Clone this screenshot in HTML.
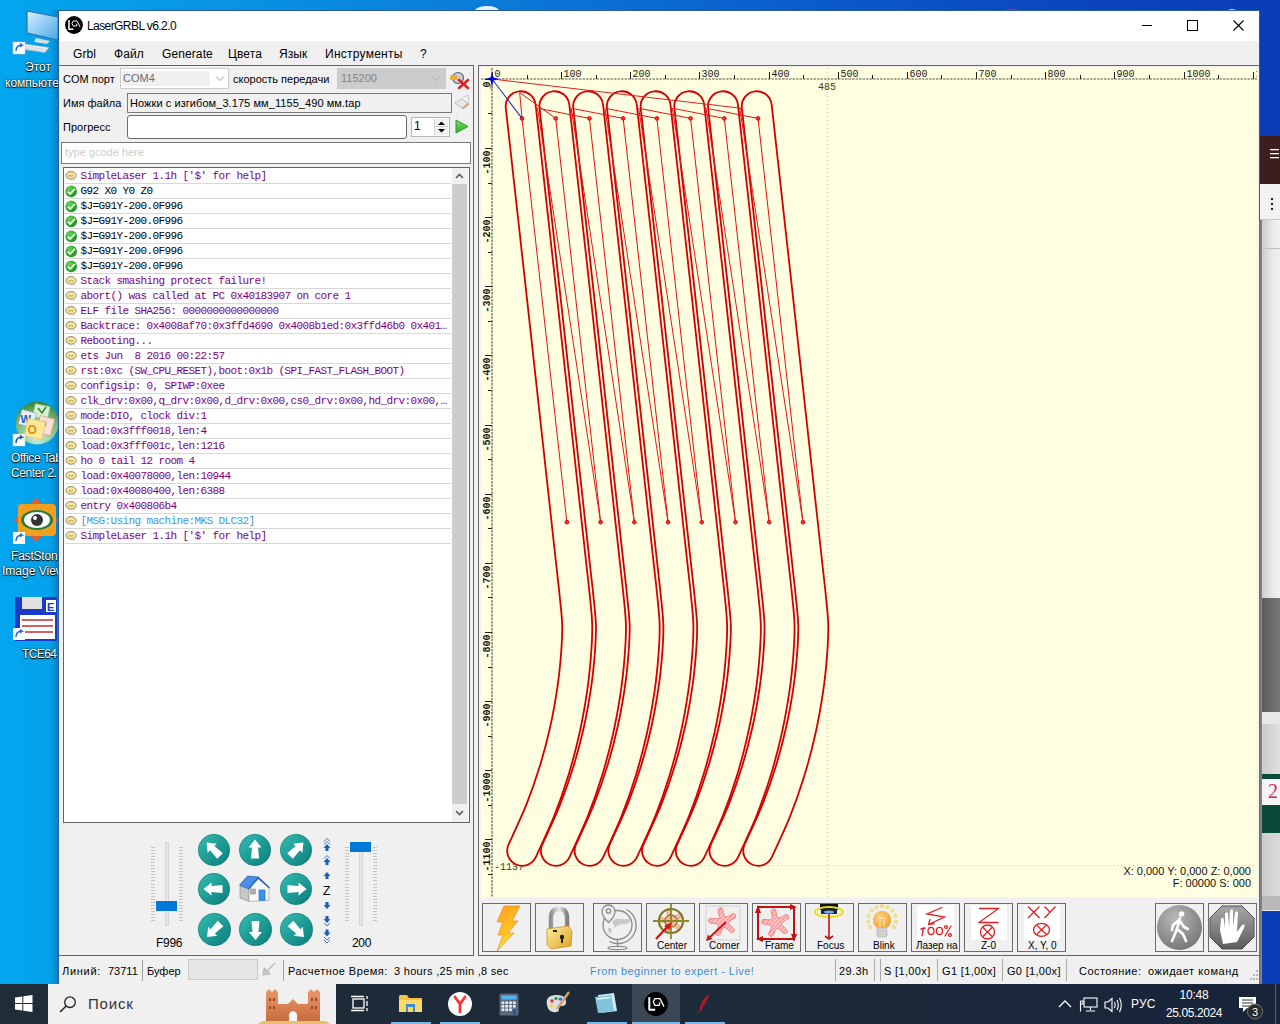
<!DOCTYPE html>
<html><head><meta charset="utf-8">
<style>
*{box-sizing:border-box;margin:0;padding:0}
html,body{width:1280px;height:1024px;overflow:hidden}
body{position:relative;font-family:"Liberation Sans",sans-serif;font-size:11px;color:#000;
background:linear-gradient(90deg,#02a6ee 0px,#0896e4 200px,#0a7ad8 500px,#0a5ccb 800px,#0a44bc 1100px,#0a3cb6 1280px)}
.a{position:absolute}
.t{position:absolute;white-space:pre;line-height:1}
svg{position:absolute;overflow:visible}
</style></head><body>
<svg style="left:0;top:0" width="1280" height="11" viewBox="0 0 1280 11"><ellipse cx="487" cy="11" rx="12" ry="5" fill="#e8f0f8"/><ellipse cx="1012" cy="11" rx="8" ry="2.5" fill="#b0208a"/><ellipse cx="1232" cy="11" rx="4" ry="2" fill="#c8d8f0"/></svg>
<div class="a" style="left:50px;top:10px;width:8px;height:974px;background:linear-gradient(90deg,rgba(0,0,0,0),rgba(0,40,80,0.25))"></div>
<div class="a" style="left:58px;top:10px;width:1202px;height:974px;background:#f0f0f0;border:1px solid #2b5d9a;border-bottom:none"></div>
<div class="a" style="left:59px;top:11px;width:1200px;height:30px;background:#fff"></div>
<svg style="left:65px;top:16px" width="18" height="18" viewBox="0 0 24 24"><circle cx="12" cy="12" r="11.9" fill="#000"/><path d="M5.3 5.3 V17.7 H11.2" stroke="#fff" stroke-width="2" fill="none" stroke-linejoin="round"/><path d="M9.2 10 L11 6.6 H16 L20 14.6 M9.2 10 L11 13.4 H15.2 L15.9 10.4" stroke="#fff" stroke-width="1.3" fill="none" stroke-linejoin="round"/></svg>
<div class="t" style="left:87px;top:20px;font-size:12px;color:#000;font-family:'Liberation Sans';letter-spacing:-0.58px">LaserGRBL v6.2.0</div>
<div class="a" style="left:1142px;top:25px;width:10px;height:1px;background:#000"></div>
<div class="a" style="left:1187px;top:20px;width:11px;height:11px;border:1px solid #000"></div>
<svg style="left:1233px;top:20px" width="11" height="11" viewBox="0 0 11 11"><path d="M0.5 0.5 L10.5 10.5 M10.5 0.5 L0.5 10.5" stroke="#000" stroke-width="1.1"/></svg>
<div class="a" style="left:59px;top:41px;width:1200px;height:24px;background:#f0f0f0"></div>
<div class="t" style="left:73px;top:48px;font-size:12px;color:#000;font-family:'Liberation Sans';letter-spacing:0.1px">Grbl</div>
<div class="t" style="left:114px;top:48px;font-size:12px;color:#000;font-family:'Liberation Sans';letter-spacing:0.1px">Файл</div>
<div class="t" style="left:162px;top:48px;font-size:12px;color:#000;font-family:'Liberation Sans';letter-spacing:0.1px">Generate</div>
<div class="t" style="left:228px;top:48px;font-size:12px;color:#000;font-family:'Liberation Sans';letter-spacing:0.1px">Цвета</div>
<div class="t" style="left:279px;top:48px;font-size:12px;color:#000;font-family:'Liberation Sans';letter-spacing:0.1px">Язык</div>
<div class="t" style="left:325px;top:48px;font-size:12px;color:#000;font-family:'Liberation Sans';letter-spacing:0.25px">Инструменты</div>
<div class="t" style="left:420px;top:48px;font-size:12px;color:#000;font-family:'Liberation Sans';letter-spacing:0.1px">?</div>
<div class="a" style="left:58px;top:65px;width:416px;height:891px;border:1px solid #646464;border-left:none"></div>
<div class="a" style="left:478px;top:65px;width:782px;height:891px;border:1px solid #646464;border-right:none"></div>
<div class="t" style="left:63px;top:74px;font-size:11px;color:#000;font-family:'Liberation Sans';">COM порт</div>
<div class="a" style="left:120px;top:68px;width:109px;height:21px;border:1px solid #cccccc;background:#fff"></div>
<div class="a" style="left:122px;top:71px;width:88px;height:15px;background:#f0f0f0"></div>
<div class="t" style="left:123px;top:73px;font-size:11px;color:#6d6d6d;font-family:'Liberation Sans';">COM4</div>
<svg style="left:215px;top:75px" width="10" height="7" viewBox="0 0 10 7"><path d="M1 1.5 L5 5.5 L9 1.5" stroke="#a0a0a0" stroke-width="1" fill="none"/></svg>
<div class="t" style="left:233px;top:74px;font-size:11px;color:#000;font-family:'Liberation Sans';">скорость передачи</div>
<div class="a" style="left:337px;top:68px;width:109px;height:21px;background:#cccccc"></div>
<div class="t" style="left:341px;top:73px;font-size:11px;color:#838383;font-family:'Liberation Sans';">115200</div>
<svg style="left:431px;top:75px" width="10" height="7" viewBox="0 0 10 7"><path d="M1 1.5 L5 5.5 L9 1.5" stroke="#a8a8a8" stroke-width="1" fill="none"/></svg>
<svg style="left:449px;top:70px" width="21" height="20" viewBox="0 0 21 20"><circle cx="9" cy="8" r="5.5" fill="#c8cdd6" stroke="#5a6270" stroke-width="1.2"/><rect x="1" y="5" width="7" height="5" fill="#e8b030" rx="1"/><path d="M10 10 L19 18 M19 10 L10 18" stroke="#e02020" stroke-width="2.6" stroke-linecap="round"/></svg>
<div class="t" style="left:63px;top:98px;font-size:11px;color:#000;font-family:'Liberation Sans';">Имя файла</div>
<div class="a" style="left:127px;top:93px;width:325px;height:20px;border:1px solid #7a7a7a;background:#f0f0f0"></div>
<div class="t" style="left:130px;top:98px;font-size:11px;color:#000;font-family:'Liberation Sans';letter-spacing:0.07px">Ножки с изгибом_3.175 мм_1155_490 мм.tap</div>
<svg style="left:454px;top:94px" width="16" height="16" viewBox="0 0 16 16"><path d="M1 9 L7 5 L14 9 L8 14 Z" fill="#e8e8e8" stroke="#b0b0b0" stroke-width="0.8"/><path d="M8 14 L15 8 L15 11 L9 15.5 Z" fill="#d4a880"/><path d="M9 4 L14 1 L15 7" fill="#f4f4f4" stroke="#b8b8b8" stroke-width="0.8"/></svg>
<div class="t" style="left:63px;top:122px;font-size:11px;color:#000;font-family:'Liberation Sans';">Прогресс</div>
<div class="a" style="left:127px;top:115px;width:280px;height:24px;border:1px solid #6d6d6d;border-radius:3px;background:#fff"></div>
<div class="a" style="left:411px;top:117px;width:39px;height:20px;border:1px solid #b4b4b4;background:#fff"></div>
<div class="a" style="left:434px;top:119px;width:14px;height:16px;background:#f0f0f0;border-left:1px solid #cfcfcf"></div>
<div class="a" style="left:434px;top:126px;width:14px;height:1px;background:#cfcfcf"></div>
<svg style="left:437px;top:120px" width="9" height="14" viewBox="0 0 9 14"><path d="M1 5 L4.5 1.5 L8 5 Z M1 9 L4.5 12.5 L8 9 Z" fill="#000"/></svg>
<div class="t" style="left:414px;top:120px;font-size:12px;color:#000;font-family:'Liberation Sans';">1</div>
<svg style="left:455px;top:119px" width="14" height="15" viewBox="0 0 14 15"><defs><linearGradient id="gp" x1="0" y1="0" x2="0" y2="1"><stop offset="0" stop-color="#7ee06a"/><stop offset="1" stop-color="#2ca82a"/></linearGradient></defs><path d="M1 1 L13 7.5 L1 14 Z" fill="url(#gp)" stroke="#2a9a2a" stroke-width="1"/></svg>
<div class="a" style="left:61px;top:142px;width:410px;height:22px;border:1px solid #7a7a7a;background:#fff"></div>
<div class="t" style="left:65px;top:146.5px;font-size:11px;color:#cccccc;font-family:'Liberation Sans';">type gcode here</div>
<div class="a" style="left:63px;top:167px;width:407px;height:656px;border:1px solid #646464;background:#fff"></div>
<svg style="left:65px;top:171px" width="13" height="12" viewBox="0 0 13 12"><ellipse cx="6" cy="4.4" rx="5.2" ry="3.8" fill="#f4e4a0" stroke="#9a8c6a" stroke-width="1"/><path d="M8 8 L10 10.5 L9.2 7.6" fill="#c8c0a8"/><path d="M3.8 4.2 h1.3 v1.4 h-1.3z M6.4 4.2 h1.3 v1.4 h-1.3z" fill="#9a7a20"/></svg>
<div class="t" style="left:80.5px;top:171px;font-family:'Liberation Mono';font-size:11px;letter-spacing:-0.6px;color:#7f007f">SimpleLaser 1.1h [&#x27;$&#x27; for help]</div>
<div class="a" style="left:65px;top:183px;width:386px;height:1px;background:#d8d8d8"></div>
<svg style="left:65px;top:185px" width="13" height="13" viewBox="0 0 13 13"><defs><radialGradient id="gc1" cx="0.35" cy="0.3" r="0.8"><stop offset="0" stop-color="#6cd060"/><stop offset="1" stop-color="#138a14"/></radialGradient></defs><circle cx="6.2" cy="6.4" r="5.8" fill="url(#gc1)"/><path d="M2.8 6.6 L5.2 9 L9.8 3.9" stroke="#e6ffe2" stroke-width="1.8" fill="none"/></svg>
<div class="t" style="left:80.5px;top:186px;font-family:'Liberation Mono';font-size:11px;letter-spacing:-0.6px;color:#000">G92 X0 Y0 Z0</div>
<div class="a" style="left:65px;top:198px;width:386px;height:1px;background:#d8d8d8"></div>
<svg style="left:65px;top:200px" width="13" height="13" viewBox="0 0 13 13"><defs><radialGradient id="gc2" cx="0.35" cy="0.3" r="0.8"><stop offset="0" stop-color="#6cd060"/><stop offset="1" stop-color="#138a14"/></radialGradient></defs><circle cx="6.2" cy="6.4" r="5.8" fill="url(#gc2)"/><path d="M2.8 6.6 L5.2 9 L9.8 3.9" stroke="#e6ffe2" stroke-width="1.8" fill="none"/></svg>
<div class="t" style="left:80.5px;top:201px;font-family:'Liberation Mono';font-size:11px;letter-spacing:-0.6px;color:#000">$J=G91Y-200.0F996</div>
<div class="a" style="left:65px;top:213px;width:386px;height:1px;background:#d8d8d8"></div>
<svg style="left:65px;top:215px" width="13" height="13" viewBox="0 0 13 13"><defs><radialGradient id="gc3" cx="0.35" cy="0.3" r="0.8"><stop offset="0" stop-color="#6cd060"/><stop offset="1" stop-color="#138a14"/></radialGradient></defs><circle cx="6.2" cy="6.4" r="5.8" fill="url(#gc3)"/><path d="M2.8 6.6 L5.2 9 L9.8 3.9" stroke="#e6ffe2" stroke-width="1.8" fill="none"/></svg>
<div class="t" style="left:80.5px;top:216px;font-family:'Liberation Mono';font-size:11px;letter-spacing:-0.6px;color:#000">$J=G91Y-200.0F996</div>
<div class="a" style="left:65px;top:228px;width:386px;height:1px;background:#d8d8d8"></div>
<svg style="left:65px;top:230px" width="13" height="13" viewBox="0 0 13 13"><defs><radialGradient id="gc4" cx="0.35" cy="0.3" r="0.8"><stop offset="0" stop-color="#6cd060"/><stop offset="1" stop-color="#138a14"/></radialGradient></defs><circle cx="6.2" cy="6.4" r="5.8" fill="url(#gc4)"/><path d="M2.8 6.6 L5.2 9 L9.8 3.9" stroke="#e6ffe2" stroke-width="1.8" fill="none"/></svg>
<div class="t" style="left:80.5px;top:231px;font-family:'Liberation Mono';font-size:11px;letter-spacing:-0.6px;color:#000">$J=G91Y-200.0F996</div>
<div class="a" style="left:65px;top:243px;width:386px;height:1px;background:#d8d8d8"></div>
<svg style="left:65px;top:245px" width="13" height="13" viewBox="0 0 13 13"><defs><radialGradient id="gc5" cx="0.35" cy="0.3" r="0.8"><stop offset="0" stop-color="#6cd060"/><stop offset="1" stop-color="#138a14"/></radialGradient></defs><circle cx="6.2" cy="6.4" r="5.8" fill="url(#gc5)"/><path d="M2.8 6.6 L5.2 9 L9.8 3.9" stroke="#e6ffe2" stroke-width="1.8" fill="none"/></svg>
<div class="t" style="left:80.5px;top:246px;font-family:'Liberation Mono';font-size:11px;letter-spacing:-0.6px;color:#000">$J=G91Y-200.0F996</div>
<div class="a" style="left:65px;top:258px;width:386px;height:1px;background:#d8d8d8"></div>
<svg style="left:65px;top:260px" width="13" height="13" viewBox="0 0 13 13"><defs><radialGradient id="gc6" cx="0.35" cy="0.3" r="0.8"><stop offset="0" stop-color="#6cd060"/><stop offset="1" stop-color="#138a14"/></radialGradient></defs><circle cx="6.2" cy="6.4" r="5.8" fill="url(#gc6)"/><path d="M2.8 6.6 L5.2 9 L9.8 3.9" stroke="#e6ffe2" stroke-width="1.8" fill="none"/></svg>
<div class="t" style="left:80.5px;top:261px;font-family:'Liberation Mono';font-size:11px;letter-spacing:-0.6px;color:#000">$J=G91Y-200.0F996</div>
<div class="a" style="left:65px;top:273px;width:386px;height:1px;background:#d8d8d8"></div>
<svg style="left:65px;top:276px" width="13" height="12" viewBox="0 0 13 12"><ellipse cx="6" cy="4.4" rx="5.2" ry="3.8" fill="#f4e4a0" stroke="#9a8c6a" stroke-width="1"/><path d="M8 8 L10 10.5 L9.2 7.6" fill="#c8c0a8"/><path d="M3.8 4.2 h1.3 v1.4 h-1.3z M6.4 4.2 h1.3 v1.4 h-1.3z" fill="#9a7a20"/></svg>
<div class="t" style="left:80.5px;top:276px;font-family:'Liberation Mono';font-size:11px;letter-spacing:-0.6px;color:#7f007f">Stack smashing protect failure!</div>
<div class="a" style="left:65px;top:288px;width:386px;height:1px;background:#d8d8d8"></div>
<svg style="left:65px;top:291px" width="13" height="12" viewBox="0 0 13 12"><ellipse cx="6" cy="4.4" rx="5.2" ry="3.8" fill="#f4e4a0" stroke="#9a8c6a" stroke-width="1"/><path d="M8 8 L10 10.5 L9.2 7.6" fill="#c8c0a8"/><path d="M3.8 4.2 h1.3 v1.4 h-1.3z M6.4 4.2 h1.3 v1.4 h-1.3z" fill="#9a7a20"/></svg>
<div class="t" style="left:80.5px;top:291px;font-family:'Liberation Mono';font-size:11px;letter-spacing:-0.6px;color:#7f007f">abort() was called at PC 0x40183907 on core 1</div>
<div class="a" style="left:65px;top:303px;width:386px;height:1px;background:#d8d8d8"></div>
<svg style="left:65px;top:306px" width="13" height="12" viewBox="0 0 13 12"><ellipse cx="6" cy="4.4" rx="5.2" ry="3.8" fill="#f4e4a0" stroke="#9a8c6a" stroke-width="1"/><path d="M8 8 L10 10.5 L9.2 7.6" fill="#c8c0a8"/><path d="M3.8 4.2 h1.3 v1.4 h-1.3z M6.4 4.2 h1.3 v1.4 h-1.3z" fill="#9a7a20"/></svg>
<div class="t" style="left:80.5px;top:306px;font-family:'Liberation Mono';font-size:11px;letter-spacing:-0.6px;color:#7f007f">ELF file SHA256: 0000000000000000</div>
<div class="a" style="left:65px;top:318px;width:386px;height:1px;background:#d8d8d8"></div>
<svg style="left:65px;top:321px" width="13" height="12" viewBox="0 0 13 12"><ellipse cx="6" cy="4.4" rx="5.2" ry="3.8" fill="#f4e4a0" stroke="#9a8c6a" stroke-width="1"/><path d="M8 8 L10 10.5 L9.2 7.6" fill="#c8c0a8"/><path d="M3.8 4.2 h1.3 v1.4 h-1.3z M6.4 4.2 h1.3 v1.4 h-1.3z" fill="#9a7a20"/></svg>
<div class="t" style="left:80.5px;top:321px;font-family:'Liberation Mono';font-size:11px;letter-spacing:-0.6px;color:#7f007f">Backtrace: 0x4008af70:0x3ffd4690 0x4008b1ed:0x3ffd46b0 0x401…</div>
<div class="a" style="left:65px;top:333px;width:386px;height:1px;background:#d8d8d8"></div>
<svg style="left:65px;top:336px" width="13" height="12" viewBox="0 0 13 12"><ellipse cx="6" cy="4.4" rx="5.2" ry="3.8" fill="#f4e4a0" stroke="#9a8c6a" stroke-width="1"/><path d="M8 8 L10 10.5 L9.2 7.6" fill="#c8c0a8"/><path d="M3.8 4.2 h1.3 v1.4 h-1.3z M6.4 4.2 h1.3 v1.4 h-1.3z" fill="#9a7a20"/></svg>
<div class="t" style="left:80.5px;top:336px;font-family:'Liberation Mono';font-size:11px;letter-spacing:-0.6px;color:#7f007f">Rebooting...</div>
<div class="a" style="left:65px;top:348px;width:386px;height:1px;background:#d8d8d8"></div>
<svg style="left:65px;top:351px" width="13" height="12" viewBox="0 0 13 12"><ellipse cx="6" cy="4.4" rx="5.2" ry="3.8" fill="#f4e4a0" stroke="#9a8c6a" stroke-width="1"/><path d="M8 8 L10 10.5 L9.2 7.6" fill="#c8c0a8"/><path d="M3.8 4.2 h1.3 v1.4 h-1.3z M6.4 4.2 h1.3 v1.4 h-1.3z" fill="#9a7a20"/></svg>
<div class="t" style="left:80.5px;top:351px;font-family:'Liberation Mono';font-size:11px;letter-spacing:-0.6px;color:#7f007f">ets Jun  8 2016 00:22:57</div>
<div class="a" style="left:65px;top:363px;width:386px;height:1px;background:#d8d8d8"></div>
<svg style="left:65px;top:366px" width="13" height="12" viewBox="0 0 13 12"><ellipse cx="6" cy="4.4" rx="5.2" ry="3.8" fill="#f4e4a0" stroke="#9a8c6a" stroke-width="1"/><path d="M8 8 L10 10.5 L9.2 7.6" fill="#c8c0a8"/><path d="M3.8 4.2 h1.3 v1.4 h-1.3z M6.4 4.2 h1.3 v1.4 h-1.3z" fill="#9a7a20"/></svg>
<div class="t" style="left:80.5px;top:366px;font-family:'Liberation Mono';font-size:11px;letter-spacing:-0.6px;color:#7f007f">rst:0xc (SW_CPU_RESET),boot:0x1b (SPI_FAST_FLASH_BOOT)</div>
<div class="a" style="left:65px;top:378px;width:386px;height:1px;background:#d8d8d8"></div>
<svg style="left:65px;top:381px" width="13" height="12" viewBox="0 0 13 12"><ellipse cx="6" cy="4.4" rx="5.2" ry="3.8" fill="#f4e4a0" stroke="#9a8c6a" stroke-width="1"/><path d="M8 8 L10 10.5 L9.2 7.6" fill="#c8c0a8"/><path d="M3.8 4.2 h1.3 v1.4 h-1.3z M6.4 4.2 h1.3 v1.4 h-1.3z" fill="#9a7a20"/></svg>
<div class="t" style="left:80.5px;top:381px;font-family:'Liberation Mono';font-size:11px;letter-spacing:-0.6px;color:#7f007f">configsip: 0, SPIWP:0xee</div>
<div class="a" style="left:65px;top:393px;width:386px;height:1px;background:#d8d8d8"></div>
<svg style="left:65px;top:396px" width="13" height="12" viewBox="0 0 13 12"><ellipse cx="6" cy="4.4" rx="5.2" ry="3.8" fill="#f4e4a0" stroke="#9a8c6a" stroke-width="1"/><path d="M8 8 L10 10.5 L9.2 7.6" fill="#c8c0a8"/><path d="M3.8 4.2 h1.3 v1.4 h-1.3z M6.4 4.2 h1.3 v1.4 h-1.3z" fill="#9a7a20"/></svg>
<div class="t" style="left:80.5px;top:396px;font-family:'Liberation Mono';font-size:11px;letter-spacing:-0.6px;color:#7f007f">clk_drv:0x00,q_drv:0x00,d_drv:0x00,cs0_drv:0x00,hd_drv:0x00,…</div>
<div class="a" style="left:65px;top:408px;width:386px;height:1px;background:#d8d8d8"></div>
<svg style="left:65px;top:411px" width="13" height="12" viewBox="0 0 13 12"><ellipse cx="6" cy="4.4" rx="5.2" ry="3.8" fill="#f4e4a0" stroke="#9a8c6a" stroke-width="1"/><path d="M8 8 L10 10.5 L9.2 7.6" fill="#c8c0a8"/><path d="M3.8 4.2 h1.3 v1.4 h-1.3z M6.4 4.2 h1.3 v1.4 h-1.3z" fill="#9a7a20"/></svg>
<div class="t" style="left:80.5px;top:411px;font-family:'Liberation Mono';font-size:11px;letter-spacing:-0.6px;color:#7f007f">mode:DIO, clock div:1</div>
<div class="a" style="left:65px;top:423px;width:386px;height:1px;background:#d8d8d8"></div>
<svg style="left:65px;top:426px" width="13" height="12" viewBox="0 0 13 12"><ellipse cx="6" cy="4.4" rx="5.2" ry="3.8" fill="#f4e4a0" stroke="#9a8c6a" stroke-width="1"/><path d="M8 8 L10 10.5 L9.2 7.6" fill="#c8c0a8"/><path d="M3.8 4.2 h1.3 v1.4 h-1.3z M6.4 4.2 h1.3 v1.4 h-1.3z" fill="#9a7a20"/></svg>
<div class="t" style="left:80.5px;top:426px;font-family:'Liberation Mono';font-size:11px;letter-spacing:-0.6px;color:#7f007f">load:0x3fff0018,len:4</div>
<div class="a" style="left:65px;top:438px;width:386px;height:1px;background:#d8d8d8"></div>
<svg style="left:65px;top:441px" width="13" height="12" viewBox="0 0 13 12"><ellipse cx="6" cy="4.4" rx="5.2" ry="3.8" fill="#f4e4a0" stroke="#9a8c6a" stroke-width="1"/><path d="M8 8 L10 10.5 L9.2 7.6" fill="#c8c0a8"/><path d="M3.8 4.2 h1.3 v1.4 h-1.3z M6.4 4.2 h1.3 v1.4 h-1.3z" fill="#9a7a20"/></svg>
<div class="t" style="left:80.5px;top:441px;font-family:'Liberation Mono';font-size:11px;letter-spacing:-0.6px;color:#7f007f">load:0x3fff001c,len:1216</div>
<div class="a" style="left:65px;top:453px;width:386px;height:1px;background:#d8d8d8"></div>
<svg style="left:65px;top:456px" width="13" height="12" viewBox="0 0 13 12"><ellipse cx="6" cy="4.4" rx="5.2" ry="3.8" fill="#f4e4a0" stroke="#9a8c6a" stroke-width="1"/><path d="M8 8 L10 10.5 L9.2 7.6" fill="#c8c0a8"/><path d="M3.8 4.2 h1.3 v1.4 h-1.3z M6.4 4.2 h1.3 v1.4 h-1.3z" fill="#9a7a20"/></svg>
<div class="t" style="left:80.5px;top:456px;font-family:'Liberation Mono';font-size:11px;letter-spacing:-0.6px;color:#7f007f">ho 0 tail 12 room 4</div>
<div class="a" style="left:65px;top:468px;width:386px;height:1px;background:#d8d8d8"></div>
<svg style="left:65px;top:471px" width="13" height="12" viewBox="0 0 13 12"><ellipse cx="6" cy="4.4" rx="5.2" ry="3.8" fill="#f4e4a0" stroke="#9a8c6a" stroke-width="1"/><path d="M8 8 L10 10.5 L9.2 7.6" fill="#c8c0a8"/><path d="M3.8 4.2 h1.3 v1.4 h-1.3z M6.4 4.2 h1.3 v1.4 h-1.3z" fill="#9a7a20"/></svg>
<div class="t" style="left:80.5px;top:471px;font-family:'Liberation Mono';font-size:11px;letter-spacing:-0.6px;color:#7f007f">load:0x40078000,len:10944</div>
<div class="a" style="left:65px;top:483px;width:386px;height:1px;background:#d8d8d8"></div>
<svg style="left:65px;top:486px" width="13" height="12" viewBox="0 0 13 12"><ellipse cx="6" cy="4.4" rx="5.2" ry="3.8" fill="#f4e4a0" stroke="#9a8c6a" stroke-width="1"/><path d="M8 8 L10 10.5 L9.2 7.6" fill="#c8c0a8"/><path d="M3.8 4.2 h1.3 v1.4 h-1.3z M6.4 4.2 h1.3 v1.4 h-1.3z" fill="#9a7a20"/></svg>
<div class="t" style="left:80.5px;top:486px;font-family:'Liberation Mono';font-size:11px;letter-spacing:-0.6px;color:#7f007f">load:0x40080400,len:6388</div>
<div class="a" style="left:65px;top:498px;width:386px;height:1px;background:#d8d8d8"></div>
<svg style="left:65px;top:501px" width="13" height="12" viewBox="0 0 13 12"><ellipse cx="6" cy="4.4" rx="5.2" ry="3.8" fill="#f4e4a0" stroke="#9a8c6a" stroke-width="1"/><path d="M8 8 L10 10.5 L9.2 7.6" fill="#c8c0a8"/><path d="M3.8 4.2 h1.3 v1.4 h-1.3z M6.4 4.2 h1.3 v1.4 h-1.3z" fill="#9a7a20"/></svg>
<div class="t" style="left:80.5px;top:501px;font-family:'Liberation Mono';font-size:11px;letter-spacing:-0.6px;color:#7f007f">entry 0x400806b4</div>
<div class="a" style="left:65px;top:513px;width:386px;height:1px;background:#d8d8d8"></div>
<svg style="left:65px;top:516px" width="13" height="12" viewBox="0 0 13 12"><ellipse cx="6" cy="4.4" rx="5.2" ry="3.8" fill="#f4e4a0" stroke="#9a8c6a" stroke-width="1"/><path d="M8 8 L10 10.5 L9.2 7.6" fill="#c8c0a8"/><path d="M3.8 4.2 h1.3 v1.4 h-1.3z M6.4 4.2 h1.3 v1.4 h-1.3z" fill="#9a7a20"/></svg>
<div class="t" style="left:80.5px;top:516px;font-family:'Liberation Mono';font-size:11px;letter-spacing:-0.6px;color:#3d9ad8">[MSG:Using machine:MKS DLC32]</div>
<div class="a" style="left:65px;top:528px;width:386px;height:1px;background:#d8d8d8"></div>
<svg style="left:65px;top:531px" width="13" height="12" viewBox="0 0 13 12"><ellipse cx="6" cy="4.4" rx="5.2" ry="3.8" fill="#f4e4a0" stroke="#9a8c6a" stroke-width="1"/><path d="M8 8 L10 10.5 L9.2 7.6" fill="#c8c0a8"/><path d="M3.8 4.2 h1.3 v1.4 h-1.3z M6.4 4.2 h1.3 v1.4 h-1.3z" fill="#9a7a20"/></svg>
<div class="t" style="left:80.5px;top:531px;font-family:'Liberation Mono';font-size:11px;letter-spacing:-0.6px;color:#7f007f">SimpleLaser 1.1h [&#x27;$&#x27; for help]</div>
<div class="a" style="left:65px;top:543px;width:386px;height:1px;background:#d8d8d8"></div>
<div class="a" style="left:452px;top:168px;width:16px;height:654px;background:#f0f0f0"></div>
<div class="a" style="left:452px;top:184px;width:15px;height:620px;background:#cdcdcd"></div>
<svg style="left:455px;top:173px" width="9" height="6" viewBox="0 0 9 6"><path d="M1 5 L4.5 1.5 L8 5" stroke="#606060" stroke-width="1.6" fill="none"/></svg>
<svg style="left:455px;top:810px" width="9" height="6" viewBox="0 0 9 6"><path d="M1 1 L4.5 4.5 L8 1" stroke="#606060" stroke-width="1.6" fill="none"/></svg>
<div class="a" style="left:165px;top:842px;width:4px;height:84px;background:#e7e7e7;border:1px solid #d6d6d6"></div>
<div class="a" style="left:151px;top:847px;width:4px;height:1px;background:#c4c4c4"></div>
<div class="a" style="left:179px;top:847px;width:4px;height:1px;background:#c4c4c4"></div>
<div class="a" style="left:151px;top:850px;width:4px;height:1px;background:#c4c4c4"></div>
<div class="a" style="left:179px;top:850px;width:4px;height:1px;background:#c4c4c4"></div>
<div class="a" style="left:151px;top:853px;width:4px;height:1px;background:#c4c4c4"></div>
<div class="a" style="left:179px;top:853px;width:4px;height:1px;background:#c4c4c4"></div>
<div class="a" style="left:151px;top:856px;width:4px;height:1px;background:#c4c4c4"></div>
<div class="a" style="left:179px;top:856px;width:4px;height:1px;background:#c4c4c4"></div>
<div class="a" style="left:151px;top:859px;width:4px;height:1px;background:#c4c4c4"></div>
<div class="a" style="left:179px;top:859px;width:4px;height:1px;background:#c4c4c4"></div>
<div class="a" style="left:151px;top:862px;width:4px;height:1px;background:#c4c4c4"></div>
<div class="a" style="left:179px;top:862px;width:4px;height:1px;background:#c4c4c4"></div>
<div class="a" style="left:151px;top:865px;width:4px;height:1px;background:#c4c4c4"></div>
<div class="a" style="left:179px;top:865px;width:4px;height:1px;background:#c4c4c4"></div>
<div class="a" style="left:151px;top:868px;width:4px;height:1px;background:#c4c4c4"></div>
<div class="a" style="left:179px;top:868px;width:4px;height:1px;background:#c4c4c4"></div>
<div class="a" style="left:151px;top:871px;width:4px;height:1px;background:#c4c4c4"></div>
<div class="a" style="left:179px;top:871px;width:4px;height:1px;background:#c4c4c4"></div>
<div class="a" style="left:151px;top:874px;width:4px;height:1px;background:#c4c4c4"></div>
<div class="a" style="left:179px;top:874px;width:4px;height:1px;background:#c4c4c4"></div>
<div class="a" style="left:151px;top:877px;width:4px;height:1px;background:#c4c4c4"></div>
<div class="a" style="left:179px;top:877px;width:4px;height:1px;background:#c4c4c4"></div>
<div class="a" style="left:151px;top:880px;width:4px;height:1px;background:#c4c4c4"></div>
<div class="a" style="left:179px;top:880px;width:4px;height:1px;background:#c4c4c4"></div>
<div class="a" style="left:151px;top:884px;width:4px;height:1px;background:#c4c4c4"></div>
<div class="a" style="left:179px;top:884px;width:4px;height:1px;background:#c4c4c4"></div>
<div class="a" style="left:151px;top:887px;width:4px;height:1px;background:#c4c4c4"></div>
<div class="a" style="left:179px;top:887px;width:4px;height:1px;background:#c4c4c4"></div>
<div class="a" style="left:151px;top:890px;width:4px;height:1px;background:#c4c4c4"></div>
<div class="a" style="left:179px;top:890px;width:4px;height:1px;background:#c4c4c4"></div>
<div class="a" style="left:151px;top:893px;width:4px;height:1px;background:#c4c4c4"></div>
<div class="a" style="left:179px;top:893px;width:4px;height:1px;background:#c4c4c4"></div>
<div class="a" style="left:151px;top:896px;width:4px;height:1px;background:#c4c4c4"></div>
<div class="a" style="left:179px;top:896px;width:4px;height:1px;background:#c4c4c4"></div>
<div class="a" style="left:151px;top:899px;width:4px;height:1px;background:#c4c4c4"></div>
<div class="a" style="left:179px;top:899px;width:4px;height:1px;background:#c4c4c4"></div>
<div class="a" style="left:151px;top:902px;width:4px;height:1px;background:#c4c4c4"></div>
<div class="a" style="left:179px;top:902px;width:4px;height:1px;background:#c4c4c4"></div>
<div class="a" style="left:151px;top:905px;width:4px;height:1px;background:#c4c4c4"></div>
<div class="a" style="left:179px;top:905px;width:4px;height:1px;background:#c4c4c4"></div>
<div class="a" style="left:151px;top:908px;width:4px;height:1px;background:#c4c4c4"></div>
<div class="a" style="left:179px;top:908px;width:4px;height:1px;background:#c4c4c4"></div>
<div class="a" style="left:151px;top:911px;width:4px;height:1px;background:#c4c4c4"></div>
<div class="a" style="left:179px;top:911px;width:4px;height:1px;background:#c4c4c4"></div>
<div class="a" style="left:151px;top:914px;width:4px;height:1px;background:#c4c4c4"></div>
<div class="a" style="left:179px;top:914px;width:4px;height:1px;background:#c4c4c4"></div>
<div class="a" style="left:151px;top:917px;width:4px;height:1px;background:#c4c4c4"></div>
<div class="a" style="left:179px;top:917px;width:4px;height:1px;background:#c4c4c4"></div>
<div class="a" style="left:151px;top:920px;width:4px;height:1px;background:#c4c4c4"></div>
<div class="a" style="left:179px;top:920px;width:4px;height:1px;background:#c4c4c4"></div>
<div class="a" style="left:156px;top:901px;width:21px;height:10px;background:#0078d7"></div>
<div class="a" style="left:359px;top:842px;width:4px;height:84px;background:#e7e7e7;border:1px solid #d6d6d6"></div>
<div class="a" style="left:345px;top:847px;width:4px;height:1px;background:#c4c4c4"></div>
<div class="a" style="left:373px;top:847px;width:4px;height:1px;background:#c4c4c4"></div>
<div class="a" style="left:345px;top:850px;width:4px;height:1px;background:#c4c4c4"></div>
<div class="a" style="left:373px;top:850px;width:4px;height:1px;background:#c4c4c4"></div>
<div class="a" style="left:345px;top:853px;width:4px;height:1px;background:#c4c4c4"></div>
<div class="a" style="left:373px;top:853px;width:4px;height:1px;background:#c4c4c4"></div>
<div class="a" style="left:345px;top:856px;width:4px;height:1px;background:#c4c4c4"></div>
<div class="a" style="left:373px;top:856px;width:4px;height:1px;background:#c4c4c4"></div>
<div class="a" style="left:345px;top:859px;width:4px;height:1px;background:#c4c4c4"></div>
<div class="a" style="left:373px;top:859px;width:4px;height:1px;background:#c4c4c4"></div>
<div class="a" style="left:345px;top:862px;width:4px;height:1px;background:#c4c4c4"></div>
<div class="a" style="left:373px;top:862px;width:4px;height:1px;background:#c4c4c4"></div>
<div class="a" style="left:345px;top:865px;width:4px;height:1px;background:#c4c4c4"></div>
<div class="a" style="left:373px;top:865px;width:4px;height:1px;background:#c4c4c4"></div>
<div class="a" style="left:345px;top:868px;width:4px;height:1px;background:#c4c4c4"></div>
<div class="a" style="left:373px;top:868px;width:4px;height:1px;background:#c4c4c4"></div>
<div class="a" style="left:345px;top:871px;width:4px;height:1px;background:#c4c4c4"></div>
<div class="a" style="left:373px;top:871px;width:4px;height:1px;background:#c4c4c4"></div>
<div class="a" style="left:345px;top:874px;width:4px;height:1px;background:#c4c4c4"></div>
<div class="a" style="left:373px;top:874px;width:4px;height:1px;background:#c4c4c4"></div>
<div class="a" style="left:345px;top:877px;width:4px;height:1px;background:#c4c4c4"></div>
<div class="a" style="left:373px;top:877px;width:4px;height:1px;background:#c4c4c4"></div>
<div class="a" style="left:345px;top:880px;width:4px;height:1px;background:#c4c4c4"></div>
<div class="a" style="left:373px;top:880px;width:4px;height:1px;background:#c4c4c4"></div>
<div class="a" style="left:345px;top:884px;width:4px;height:1px;background:#c4c4c4"></div>
<div class="a" style="left:373px;top:884px;width:4px;height:1px;background:#c4c4c4"></div>
<div class="a" style="left:345px;top:887px;width:4px;height:1px;background:#c4c4c4"></div>
<div class="a" style="left:373px;top:887px;width:4px;height:1px;background:#c4c4c4"></div>
<div class="a" style="left:345px;top:890px;width:4px;height:1px;background:#c4c4c4"></div>
<div class="a" style="left:373px;top:890px;width:4px;height:1px;background:#c4c4c4"></div>
<div class="a" style="left:345px;top:893px;width:4px;height:1px;background:#c4c4c4"></div>
<div class="a" style="left:373px;top:893px;width:4px;height:1px;background:#c4c4c4"></div>
<div class="a" style="left:345px;top:896px;width:4px;height:1px;background:#c4c4c4"></div>
<div class="a" style="left:373px;top:896px;width:4px;height:1px;background:#c4c4c4"></div>
<div class="a" style="left:345px;top:899px;width:4px;height:1px;background:#c4c4c4"></div>
<div class="a" style="left:373px;top:899px;width:4px;height:1px;background:#c4c4c4"></div>
<div class="a" style="left:345px;top:902px;width:4px;height:1px;background:#c4c4c4"></div>
<div class="a" style="left:373px;top:902px;width:4px;height:1px;background:#c4c4c4"></div>
<div class="a" style="left:345px;top:905px;width:4px;height:1px;background:#c4c4c4"></div>
<div class="a" style="left:373px;top:905px;width:4px;height:1px;background:#c4c4c4"></div>
<div class="a" style="left:345px;top:908px;width:4px;height:1px;background:#c4c4c4"></div>
<div class="a" style="left:373px;top:908px;width:4px;height:1px;background:#c4c4c4"></div>
<div class="a" style="left:345px;top:911px;width:4px;height:1px;background:#c4c4c4"></div>
<div class="a" style="left:373px;top:911px;width:4px;height:1px;background:#c4c4c4"></div>
<div class="a" style="left:345px;top:914px;width:4px;height:1px;background:#c4c4c4"></div>
<div class="a" style="left:373px;top:914px;width:4px;height:1px;background:#c4c4c4"></div>
<div class="a" style="left:345px;top:917px;width:4px;height:1px;background:#c4c4c4"></div>
<div class="a" style="left:373px;top:917px;width:4px;height:1px;background:#c4c4c4"></div>
<div class="a" style="left:345px;top:920px;width:4px;height:1px;background:#c4c4c4"></div>
<div class="a" style="left:373px;top:920px;width:4px;height:1px;background:#c4c4c4"></div>
<div class="a" style="left:350px;top:842px;width:21px;height:10px;background:#0078d7"></div>
<div class="t" style="left:156px;top:937px;font-size:12px;color:#000;font-family:'Liberation Sans';letter-spacing:-0.3px">F996</div>
<div class="t" style="left:352px;top:937px;font-size:12px;color:#000;font-family:'Liberation Sans';letter-spacing:-0.3px">200</div>
<svg style="left:197px;top:833px" width="34" height="34" viewBox="-17 -17 34 34"><defs><linearGradient id="jg214850" x1="0" y1="0" x2="1" y2="1"><stop offset="0" stop-color="#33bdb4"/><stop offset="1" stop-color="#0a7c78"/></linearGradient></defs><circle cx="0" cy="0" r="15.7" fill="url(#jg214850)" stroke="#0b6f6a" stroke-width="0.6"/><path transform="rotate(-45)" d="M0 -10.5 L6.5 -2.5 L3 -2.5 L4 8.5 L-4 8.5 L-3 -2.5 L-6.5 -2.5 Z" fill="#fff"/></svg>
<svg style="left:238px;top:833px" width="34" height="34" viewBox="-17 -17 34 34"><defs><linearGradient id="jg255850" x1="0" y1="0" x2="1" y2="1"><stop offset="0" stop-color="#33bdb4"/><stop offset="1" stop-color="#0a7c78"/></linearGradient></defs><circle cx="0" cy="0" r="15.7" fill="url(#jg255850)" stroke="#0b6f6a" stroke-width="0.6"/><path transform="rotate(0)" d="M0 -10.5 L6.5 -2.5 L3 -2.5 L4 8.5 L-4 8.5 L-3 -2.5 L-6.5 -2.5 Z" fill="#fff"/></svg>
<svg style="left:279px;top:833px" width="34" height="34" viewBox="-17 -17 34 34"><defs><linearGradient id="jg296850" x1="0" y1="0" x2="1" y2="1"><stop offset="0" stop-color="#33bdb4"/><stop offset="1" stop-color="#0a7c78"/></linearGradient></defs><circle cx="0" cy="0" r="15.7" fill="url(#jg296850)" stroke="#0b6f6a" stroke-width="0.6"/><path transform="rotate(45)" d="M0 -10.5 L6.5 -2.5 L3 -2.5 L4 8.5 L-4 8.5 L-3 -2.5 L-6.5 -2.5 Z" fill="#fff"/></svg>
<svg style="left:197px;top:872px" width="34" height="34" viewBox="-17 -17 34 34"><defs><linearGradient id="jg214889" x1="0" y1="0" x2="1" y2="1"><stop offset="0" stop-color="#33bdb4"/><stop offset="1" stop-color="#0a7c78"/></linearGradient></defs><circle cx="0" cy="0" r="15.7" fill="url(#jg214889)" stroke="#0b6f6a" stroke-width="0.6"/><path transform="rotate(-90)" d="M0 -10.5 L6.5 -2.5 L3 -2.5 L4 8.5 L-4 8.5 L-3 -2.5 L-6.5 -2.5 Z" fill="#fff"/></svg>
<svg style="left:279px;top:872px" width="34" height="34" viewBox="-17 -17 34 34"><defs><linearGradient id="jg296889" x1="0" y1="0" x2="1" y2="1"><stop offset="0" stop-color="#33bdb4"/><stop offset="1" stop-color="#0a7c78"/></linearGradient></defs><circle cx="0" cy="0" r="15.7" fill="url(#jg296889)" stroke="#0b6f6a" stroke-width="0.6"/><path transform="rotate(90)" d="M0 -10.5 L6.5 -2.5 L3 -2.5 L4 8.5 L-4 8.5 L-3 -2.5 L-6.5 -2.5 Z" fill="#fff"/></svg>
<svg style="left:196.5px;top:911.5px" width="35.0" height="35.0" viewBox="-17.5 -17.5 35.0 35.0"><defs><linearGradient id="jg214929" x1="0" y1="0" x2="1" y2="1"><stop offset="0" stop-color="#33bdb4"/><stop offset="1" stop-color="#0a7c78"/></linearGradient></defs><circle cx="0" cy="0" r="16.2" fill="url(#jg214929)" stroke="#0b6f6a" stroke-width="0.6"/><path transform="rotate(-135)" d="M0 -10.5 L6.5 -2.5 L3 -2.5 L4 8.5 L-4 8.5 L-3 -2.5 L-6.5 -2.5 Z" fill="#fff"/></svg>
<svg style="left:237.5px;top:911.5px" width="35.0" height="35.0" viewBox="-17.5 -17.5 35.0 35.0"><defs><linearGradient id="jg255929" x1="0" y1="0" x2="1" y2="1"><stop offset="0" stop-color="#33bdb4"/><stop offset="1" stop-color="#0a7c78"/></linearGradient></defs><circle cx="0" cy="0" r="16.2" fill="url(#jg255929)" stroke="#0b6f6a" stroke-width="0.6"/><path transform="rotate(180)" d="M0 -10.5 L6.5 -2.5 L3 -2.5 L4 8.5 L-4 8.5 L-3 -2.5 L-6.5 -2.5 Z" fill="#fff"/></svg>
<svg style="left:278.5px;top:911.5px" width="35.0" height="35.0" viewBox="-17.5 -17.5 35.0 35.0"><defs><linearGradient id="jg296929" x1="0" y1="0" x2="1" y2="1"><stop offset="0" stop-color="#33bdb4"/><stop offset="1" stop-color="#0a7c78"/></linearGradient></defs><circle cx="0" cy="0" r="16.2" fill="url(#jg296929)" stroke="#0b6f6a" stroke-width="0.6"/><path transform="rotate(135)" d="M0 -10.5 L6.5 -2.5 L3 -2.5 L4 8.5 L-4 8.5 L-3 -2.5 L-6.5 -2.5 Z" fill="#fff"/></svg>
<svg style="left:0;top:0" width="1280" height="1024" viewBox="0 0 1280 1024"><path d="M240 886 L249 889 L249 901.5 L240 898 Z" fill="#c8c8c8" stroke="#8a8a8a" stroke-width="0.6"/><path d="M249 889 L258.3 878 L269 887.4 L269 900.3 L249 901.5 Z" fill="#f6f6f6" stroke="#9a9a9a" stroke-width="0.6"/><path d="M239.5 885 L247.5 876 L258.3 877 L249 889 Z" fill="#4a8ee6" stroke="#2a62b8" stroke-width="0.7"/><path d="M258.3 876.5 L270 887.6 L269 888.5 L258.3 879 L249 889.5 L248.5 888.5 Z" fill="#2a62c0"/><rect x="259" y="890" width="6" height="10.5" fill="#3d95ea" stroke="#1e62b8" stroke-width="0.6"/><rect x="250.5" y="889" width="5" height="5" fill="#b0b0b0" stroke="#808080" stroke-width="0.5"/></svg>
<svg style="left:320px;top:834px" width="14" height="114" viewBox="320 834 14 114"><path d="M324 841.5 L327 838.5 L330 841.5" stroke="#3a7ad0" stroke-width="1" fill="none"/><path d="M324 844.5 L327 841.5 L330 844.5" stroke="#3a7ad0" stroke-width="1" fill="none"/><path d="M327 844 L330.5 848 L328.5 848 L328.5 851 L325.5 851 L325.5 848 L323.5 848 Z" fill="#1a5fb4"/><path d="M324 858.5 L327 855.5 L330 858.5" stroke="#3a7ad0" stroke-width="1" fill="none"/><path d="M327 858 L330.5 862 L328.5 862 L328.5 865 L325.5 865 L325.5 862 L323.5 862 Z" fill="#1a5fb4"/><path d="M327 872 L330.5 876 L328.5 876 L328.5 879 L325.5 879 L325.5 876 L323.5 876 Z" fill="#1a5fb4"/><path d="M327 909 L330.5 905 L328.5 905 L328.5 902 L325.5 902 L325.5 905 L323.5 905 Z" fill="#1a5fb4"/><path d="M327 923 L330.5 919 L328.5 919 L328.5 916 L325.5 916 L325.5 919 L323.5 919 Z" fill="#1a5fb4"/><path d="M324 923 L327 926 L330 923" stroke="#3a7ad0" stroke-width="1" fill="none"/><path d="M327 936.5 L330.5 932.5 L328.5 932.5 L328.5 929.5 L325.5 929.5 L325.5 932.5 L323.5 932.5 Z" fill="#1a5fb4"/><path d="M324 937 L327 940 L330 937" stroke="#3a7ad0" stroke-width="1" fill="none"/><path d="M324 940 L327 943 L330 940" stroke="#3a7ad0" stroke-width="1" fill="none"/></svg>
<div class="t" style="left:323px;top:885px;font-size:12px;color:#000;font-family:'Liberation Sans';">Z</div>
<svg style="left:0;top:0" width="1280" height="1024" viewBox="0 0 1280 1024"><defs><clipPath id="cv"><rect x="481" y="68" width="776" height="829"/></clipPath></defs><rect x="479" y="66" width="780" height="832" fill="#f4f4f0"/><rect x="481" y="68" width="776" height="829" fill="#fffee0"/><g clip-path="url(#cv)"><line x1="827.5" y1="68" x2="827.5" y2="897" stroke="#c8c8b8" stroke-width="1" stroke-dasharray="1,3"/><line x1="481" y1="865.5" x2="1257" y2="865.5" stroke="#c8c8b8" stroke-width="1" stroke-dasharray="1,3"/><text x="818" y="89.5" font-family="Liberation Mono" font-size="10" fill="#404030">485</text><text x="494" y="869.5" font-family="Liberation Mono" font-size="10" fill="#404030">-1137</text><line x1="481" y1="79" x2="1257" y2="79" stroke="#5c5c4c" stroke-width="1.2" stroke-dasharray="2.5,1"/><line x1="492" y1="68" x2="492" y2="897" stroke="#5c5c4c" stroke-width="1.2" stroke-dasharray="2.5,1"/><line x1="492.5" y1="72" x2="492.5" y2="79" stroke="#202020" stroke-width="1"/><text x="494.5" y="77" font-family="Liberation Mono" font-size="10" fill="#181810">0</text><line x1="527.5" y1="75" x2="527.5" y2="79" stroke="#202020" stroke-width="1"/><line x1="561.5" y1="72" x2="561.5" y2="79" stroke="#202020" stroke-width="1"/><text x="563.5" y="77" font-family="Liberation Mono" font-size="10" fill="#181810">100</text><line x1="596.5" y1="75" x2="596.5" y2="79" stroke="#202020" stroke-width="1"/><line x1="630.5" y1="72" x2="630.5" y2="79" stroke="#202020" stroke-width="1"/><text x="632.5" y="77" font-family="Liberation Mono" font-size="10" fill="#181810">200</text><line x1="665.5" y1="75" x2="665.5" y2="79" stroke="#202020" stroke-width="1"/><line x1="699.5" y1="72" x2="699.5" y2="79" stroke="#202020" stroke-width="1"/><text x="701.5" y="77" font-family="Liberation Mono" font-size="10" fill="#181810">300</text><line x1="734.5" y1="75" x2="734.5" y2="79" stroke="#202020" stroke-width="1"/><line x1="769.5" y1="72" x2="769.5" y2="79" stroke="#202020" stroke-width="1"/><text x="771.5" y="77" font-family="Liberation Mono" font-size="10" fill="#181810">400</text><line x1="803.5" y1="75" x2="803.5" y2="79" stroke="#202020" stroke-width="1"/><line x1="838.5" y1="72" x2="838.5" y2="79" stroke="#202020" stroke-width="1"/><text x="840.5" y="77" font-family="Liberation Mono" font-size="10" fill="#181810">500</text><line x1="872.5" y1="75" x2="872.5" y2="79" stroke="#202020" stroke-width="1"/><line x1="907.5" y1="72" x2="907.5" y2="79" stroke="#202020" stroke-width="1"/><text x="909.5" y="77" font-family="Liberation Mono" font-size="10" fill="#181810">600</text><line x1="941.5" y1="75" x2="941.5" y2="79" stroke="#202020" stroke-width="1"/><line x1="976.5" y1="72" x2="976.5" y2="79" stroke="#202020" stroke-width="1"/><text x="978.5" y="77" font-family="Liberation Mono" font-size="10" fill="#181810">700</text><line x1="1011.5" y1="75" x2="1011.5" y2="79" stroke="#202020" stroke-width="1"/><line x1="1045.5" y1="72" x2="1045.5" y2="79" stroke="#202020" stroke-width="1"/><text x="1047.5" y="77" font-family="Liberation Mono" font-size="10" fill="#181810">800</text><line x1="1080.5" y1="75" x2="1080.5" y2="79" stroke="#202020" stroke-width="1"/><line x1="1114.5" y1="72" x2="1114.5" y2="79" stroke="#202020" stroke-width="1"/><text x="1116.5" y="77" font-family="Liberation Mono" font-size="10" fill="#181810">900</text><line x1="1149.5" y1="75" x2="1149.5" y2="79" stroke="#202020" stroke-width="1"/><line x1="1184.5" y1="72" x2="1184.5" y2="79" stroke="#202020" stroke-width="1"/><text x="1186.5" y="77" font-family="Liberation Mono" font-size="10" fill="#181810">1000</text><line x1="1218.5" y1="75" x2="1218.5" y2="79" stroke="#202020" stroke-width="1"/><line x1="1253.5" y1="72" x2="1253.5" y2="79" stroke="#202020" stroke-width="1"/><text x="1255.5" y="77" font-family="Liberation Mono" font-size="10" fill="#181810">1100</text><line x1="485" y1="79.5" x2="492" y2="79.5" stroke="#202020" stroke-width="1"/><text transform="translate(489.5,81.5) rotate(-90)" text-anchor="end" font-family="Liberation Mono" font-size="10" font-weight="bold" fill="#181810">0</text><line x1="488" y1="113.5" x2="492" y2="113.5" stroke="#202020" stroke-width="1"/><line x1="485" y1="148.5" x2="492" y2="148.5" stroke="#202020" stroke-width="1"/><text transform="translate(489.5,150.5) rotate(-90)" text-anchor="end" font-family="Liberation Mono" font-size="10" font-weight="bold" fill="#181810">-100</text><line x1="488" y1="183.5" x2="492" y2="183.5" stroke="#202020" stroke-width="1"/><line x1="485" y1="217.5" x2="492" y2="217.5" stroke="#202020" stroke-width="1"/><text transform="translate(489.5,219.5) rotate(-90)" text-anchor="end" font-family="Liberation Mono" font-size="10" font-weight="bold" fill="#181810">-200</text><line x1="488" y1="252.5" x2="492" y2="252.5" stroke="#202020" stroke-width="1"/><line x1="485" y1="286.5" x2="492" y2="286.5" stroke="#202020" stroke-width="1"/><text transform="translate(489.5,288.5) rotate(-90)" text-anchor="end" font-family="Liberation Mono" font-size="10" font-weight="bold" fill="#181810">-300</text><line x1="488" y1="321.5" x2="492" y2="321.5" stroke="#202020" stroke-width="1"/><line x1="485" y1="355.5" x2="492" y2="355.5" stroke="#202020" stroke-width="1"/><text transform="translate(489.5,357.5) rotate(-90)" text-anchor="end" font-family="Liberation Mono" font-size="10" font-weight="bold" fill="#181810">-400</text><line x1="488" y1="390.5" x2="492" y2="390.5" stroke="#202020" stroke-width="1"/><line x1="485" y1="425.5" x2="492" y2="425.5" stroke="#202020" stroke-width="1"/><text transform="translate(489.5,427.5) rotate(-90)" text-anchor="end" font-family="Liberation Mono" font-size="10" font-weight="bold" fill="#181810">-500</text><line x1="488" y1="459.5" x2="492" y2="459.5" stroke="#202020" stroke-width="1"/><line x1="485" y1="494.5" x2="492" y2="494.5" stroke="#202020" stroke-width="1"/><text transform="translate(489.5,496.5) rotate(-90)" text-anchor="end" font-family="Liberation Mono" font-size="10" font-weight="bold" fill="#181810">-600</text><line x1="488" y1="528.5" x2="492" y2="528.5" stroke="#202020" stroke-width="1"/><line x1="485" y1="563.5" x2="492" y2="563.5" stroke="#202020" stroke-width="1"/><text transform="translate(489.5,565.5) rotate(-90)" text-anchor="end" font-family="Liberation Mono" font-size="10" font-weight="bold" fill="#181810">-700</text><line x1="488" y1="597.5" x2="492" y2="597.5" stroke="#202020" stroke-width="1"/><line x1="485" y1="632.5" x2="492" y2="632.5" stroke="#202020" stroke-width="1"/><text transform="translate(489.5,634.5) rotate(-90)" text-anchor="end" font-family="Liberation Mono" font-size="10" font-weight="bold" fill="#181810">-800</text><line x1="488" y1="667.5" x2="492" y2="667.5" stroke="#202020" stroke-width="1"/><line x1="485" y1="701.5" x2="492" y2="701.5" stroke="#202020" stroke-width="1"/><text transform="translate(489.5,703.5) rotate(-90)" text-anchor="end" font-family="Liberation Mono" font-size="10" font-weight="bold" fill="#181810">-900</text><line x1="488" y1="736.5" x2="492" y2="736.5" stroke="#202020" stroke-width="1"/><line x1="485" y1="770.5" x2="492" y2="770.5" stroke="#202020" stroke-width="1"/><text transform="translate(489.5,772.5) rotate(-90)" text-anchor="end" font-family="Liberation Mono" font-size="10" font-weight="bold" fill="#181810">-1000</text><line x1="488" y1="805.5" x2="492" y2="805.5" stroke="#202020" stroke-width="1"/><line x1="485" y1="839.5" x2="492" y2="839.5" stroke="#202020" stroke-width="1"/><text transform="translate(489.5,841.5) rotate(-90)" text-anchor="end" font-family="Liberation Mono" font-size="10" font-weight="bold" fill="#181810">-1100</text><line x1="488" y1="874.5" x2="492" y2="874.5" stroke="#202020" stroke-width="1"/><path d="M520.70,106.25 C524.28,138.54 535.87,242.71 542.20,300.00 C548.53,357.29 553.93,406.67 558.70,450.00 C563.47,493.33 568.14,535.83 570.80,560.00 C573.46,584.17 573.58,584.17 574.65,595.00 C575.72,605.83 576.98,615.00 577.20,625.00 C577.43,635.00 576.84,644.17 576.00,655.00 C575.16,665.83 574.02,677.50 572.16,690.00 C570.30,702.50 567.83,716.67 564.86,730.00 C561.89,743.33 558.43,756.67 554.35,770.00 C550.27,783.33 545.77,796.53 540.41,810.00 C535.05,823.47 525.24,844.00 522.20,850.80" fill="none" stroke="#d20000" stroke-width="31.8" stroke-linecap="round"/><path d="M520.70,106.25 C524.28,138.54 535.87,242.71 542.20,300.00 C548.53,357.29 553.93,406.67 558.70,450.00 C563.47,493.33 568.14,535.83 570.80,560.00 C573.46,584.17 573.58,584.17 574.65,595.00 C575.72,605.83 576.98,615.00 577.20,625.00 C577.43,635.00 576.84,644.17 576.00,655.00 C575.16,665.83 574.02,677.50 572.16,690.00 C570.30,702.50 567.83,716.67 564.86,730.00 C561.89,743.33 558.43,756.67 554.35,770.00 C550.27,783.33 545.77,796.53 540.41,810.00 C535.05,823.47 525.24,844.00 522.20,850.80" fill="none" stroke="#fffee0" stroke-width="28.2" stroke-linecap="round"/><path d="M554.42,106.25 C558.00,138.54 569.59,242.71 575.92,300.00 C582.25,357.29 587.65,406.67 592.42,450.00 C597.19,493.33 601.86,535.83 604.52,560.00 C607.18,584.17 607.30,584.17 608.37,595.00 C609.44,605.83 610.70,615.00 610.92,625.00 C611.15,635.00 610.56,644.17 609.72,655.00 C608.88,665.83 607.74,677.50 605.88,690.00 C604.02,702.50 601.55,716.67 598.58,730.00 C595.61,743.33 592.15,756.67 588.07,770.00 C584.00,783.33 579.49,796.53 574.13,810.00 C568.77,823.47 558.96,844.00 555.92,850.80" fill="none" stroke="#d20000" stroke-width="31.8" stroke-linecap="round"/><path d="M554.42,106.25 C558.00,138.54 569.59,242.71 575.92,300.00 C582.25,357.29 587.65,406.67 592.42,450.00 C597.19,493.33 601.86,535.83 604.52,560.00 C607.18,584.17 607.30,584.17 608.37,595.00 C609.44,605.83 610.70,615.00 610.92,625.00 C611.15,635.00 610.56,644.17 609.72,655.00 C608.88,665.83 607.74,677.50 605.88,690.00 C604.02,702.50 601.55,716.67 598.58,730.00 C595.61,743.33 592.15,756.67 588.07,770.00 C584.00,783.33 579.49,796.53 574.13,810.00 C568.77,823.47 558.96,844.00 555.92,850.80" fill="none" stroke="#fffee0" stroke-width="28.2" stroke-linecap="round"/><path d="M588.14,106.25 C591.72,138.54 603.31,242.71 609.64,300.00 C615.97,357.29 621.37,406.67 626.14,450.00 C630.91,493.33 635.58,535.83 638.24,560.00 C640.90,584.17 641.02,584.17 642.09,595.00 C643.16,605.83 644.42,615.00 644.64,625.00 C644.87,635.00 644.28,644.17 643.44,655.00 C642.60,665.83 641.46,677.50 639.60,690.00 C637.74,702.50 635.27,716.67 632.30,730.00 C629.33,743.33 625.87,756.67 621.79,770.00 C617.71,783.33 613.21,796.53 607.85,810.00 C602.49,823.47 592.68,844.00 589.64,850.80" fill="none" stroke="#d20000" stroke-width="31.8" stroke-linecap="round"/><path d="M588.14,106.25 C591.72,138.54 603.31,242.71 609.64,300.00 C615.97,357.29 621.37,406.67 626.14,450.00 C630.91,493.33 635.58,535.83 638.24,560.00 C640.90,584.17 641.02,584.17 642.09,595.00 C643.16,605.83 644.42,615.00 644.64,625.00 C644.87,635.00 644.28,644.17 643.44,655.00 C642.60,665.83 641.46,677.50 639.60,690.00 C637.74,702.50 635.27,716.67 632.30,730.00 C629.33,743.33 625.87,756.67 621.79,770.00 C617.71,783.33 613.21,796.53 607.85,810.00 C602.49,823.47 592.68,844.00 589.64,850.80" fill="none" stroke="#fffee0" stroke-width="28.2" stroke-linecap="round"/><path d="M621.86,106.25 C625.44,138.54 637.03,242.71 643.36,300.00 C649.69,357.29 655.09,406.67 659.86,450.00 C664.63,493.33 669.30,535.83 671.96,560.00 C674.62,584.17 674.74,584.17 675.81,595.00 C676.88,605.83 678.13,615.00 678.36,625.00 C678.59,635.00 678.00,644.17 677.16,655.00 C676.32,665.83 675.18,677.50 673.32,690.00 C671.46,702.50 668.99,716.67 666.02,730.00 C663.05,743.33 659.59,756.67 655.51,770.00 C651.43,783.33 646.93,796.53 641.57,810.00 C636.21,823.47 626.39,844.00 623.36,850.80" fill="none" stroke="#d20000" stroke-width="31.8" stroke-linecap="round"/><path d="M621.86,106.25 C625.44,138.54 637.03,242.71 643.36,300.00 C649.69,357.29 655.09,406.67 659.86,450.00 C664.63,493.33 669.30,535.83 671.96,560.00 C674.62,584.17 674.74,584.17 675.81,595.00 C676.88,605.83 678.13,615.00 678.36,625.00 C678.59,635.00 678.00,644.17 677.16,655.00 C676.32,665.83 675.18,677.50 673.32,690.00 C671.46,702.50 668.99,716.67 666.02,730.00 C663.05,743.33 659.59,756.67 655.51,770.00 C651.43,783.33 646.93,796.53 641.57,810.00 C636.21,823.47 626.39,844.00 623.36,850.80" fill="none" stroke="#fffee0" stroke-width="28.2" stroke-linecap="round"/><path d="M655.58,106.25 C659.16,138.54 670.75,242.71 677.08,300.00 C683.41,357.29 688.81,406.67 693.58,450.00 C698.35,493.33 703.02,535.83 705.68,560.00 C708.34,584.17 708.46,584.17 709.53,595.00 C710.60,605.83 711.86,615.00 712.08,625.00 C712.31,635.00 711.72,644.17 710.88,655.00 C710.04,665.83 708.90,677.50 707.04,690.00 C705.18,702.50 702.71,716.67 699.74,730.00 C696.77,743.33 693.31,756.67 689.23,770.00 C685.15,783.33 680.65,796.53 675.29,810.00 C669.93,823.47 660.12,844.00 657.08,850.80" fill="none" stroke="#d20000" stroke-width="31.8" stroke-linecap="round"/><path d="M655.58,106.25 C659.16,138.54 670.75,242.71 677.08,300.00 C683.41,357.29 688.81,406.67 693.58,450.00 C698.35,493.33 703.02,535.83 705.68,560.00 C708.34,584.17 708.46,584.17 709.53,595.00 C710.60,605.83 711.86,615.00 712.08,625.00 C712.31,635.00 711.72,644.17 710.88,655.00 C710.04,665.83 708.90,677.50 707.04,690.00 C705.18,702.50 702.71,716.67 699.74,730.00 C696.77,743.33 693.31,756.67 689.23,770.00 C685.15,783.33 680.65,796.53 675.29,810.00 C669.93,823.47 660.12,844.00 657.08,850.80" fill="none" stroke="#fffee0" stroke-width="28.2" stroke-linecap="round"/><path d="M689.30,106.25 C692.88,138.54 704.47,242.71 710.80,300.00 C717.13,357.29 722.53,406.67 727.30,450.00 C732.07,493.33 736.74,535.83 739.40,560.00 C742.06,584.17 742.18,584.17 743.25,595.00 C744.32,605.83 745.58,615.00 745.80,625.00 C746.03,635.00 745.44,644.17 744.60,655.00 C743.76,665.83 742.62,677.50 740.76,690.00 C738.90,702.50 736.43,716.67 733.46,730.00 C730.49,743.33 727.03,756.67 722.95,770.00 C718.88,783.33 714.37,796.53 709.01,810.00 C703.65,823.47 693.84,844.00 690.80,850.80" fill="none" stroke="#d20000" stroke-width="31.8" stroke-linecap="round"/><path d="M689.30,106.25 C692.88,138.54 704.47,242.71 710.80,300.00 C717.13,357.29 722.53,406.67 727.30,450.00 C732.07,493.33 736.74,535.83 739.40,560.00 C742.06,584.17 742.18,584.17 743.25,595.00 C744.32,605.83 745.58,615.00 745.80,625.00 C746.03,635.00 745.44,644.17 744.60,655.00 C743.76,665.83 742.62,677.50 740.76,690.00 C738.90,702.50 736.43,716.67 733.46,730.00 C730.49,743.33 727.03,756.67 722.95,770.00 C718.88,783.33 714.37,796.53 709.01,810.00 C703.65,823.47 693.84,844.00 690.80,850.80" fill="none" stroke="#fffee0" stroke-width="28.2" stroke-linecap="round"/><path d="M723.02,106.25 C726.60,138.54 738.19,242.71 744.52,300.00 C750.85,357.29 756.25,406.67 761.02,450.00 C765.79,493.33 770.46,535.83 773.12,560.00 C775.78,584.17 775.90,584.17 776.97,595.00 C778.04,605.83 779.29,615.00 779.52,625.00 C779.75,635.00 779.16,644.17 778.32,655.00 C777.48,665.83 776.34,677.50 774.48,690.00 C772.62,702.50 770.15,716.67 767.18,730.00 C764.21,743.33 760.75,756.67 756.67,770.00 C752.60,783.33 748.09,796.53 742.73,810.00 C737.37,823.47 727.55,844.00 724.52,850.80" fill="none" stroke="#d20000" stroke-width="31.8" stroke-linecap="round"/><path d="M723.02,106.25 C726.60,138.54 738.19,242.71 744.52,300.00 C750.85,357.29 756.25,406.67 761.02,450.00 C765.79,493.33 770.46,535.83 773.12,560.00 C775.78,584.17 775.90,584.17 776.97,595.00 C778.04,605.83 779.29,615.00 779.52,625.00 C779.75,635.00 779.16,644.17 778.32,655.00 C777.48,665.83 776.34,677.50 774.48,690.00 C772.62,702.50 770.15,716.67 767.18,730.00 C764.21,743.33 760.75,756.67 756.67,770.00 C752.60,783.33 748.09,796.53 742.73,810.00 C737.37,823.47 727.55,844.00 724.52,850.80" fill="none" stroke="#fffee0" stroke-width="28.2" stroke-linecap="round"/><path d="M756.74,106.25 C760.32,138.54 771.91,242.71 778.24,300.00 C784.57,357.29 789.97,406.67 794.74,450.00 C799.51,493.33 804.18,535.83 806.84,560.00 C809.50,584.17 809.62,584.17 810.69,595.00 C811.76,605.83 813.01,615.00 813.24,625.00 C813.47,635.00 812.88,644.17 812.04,655.00 C811.20,665.83 810.06,677.50 808.20,690.00 C806.34,702.50 803.87,716.67 800.90,730.00 C797.93,743.33 794.47,756.67 790.39,770.00 C786.31,783.33 781.81,796.53 776.45,810.00 C771.09,823.47 761.27,844.00 758.24,850.80" fill="none" stroke="#d20000" stroke-width="31.8" stroke-linecap="round"/><path d="M756.74,106.25 C760.32,138.54 771.91,242.71 778.24,300.00 C784.57,357.29 789.97,406.67 794.74,450.00 C799.51,493.33 804.18,535.83 806.84,560.00 C809.50,584.17 809.62,584.17 810.69,595.00 C811.76,605.83 813.01,615.00 813.24,625.00 C813.47,635.00 812.88,644.17 812.04,655.00 C811.20,665.83 810.06,677.50 808.20,690.00 C806.34,702.50 803.87,716.67 800.90,730.00 C797.93,743.33 794.47,756.67 790.39,770.00 C786.31,783.33 781.81,796.53 776.45,810.00 C771.09,823.47 761.27,844.00 758.24,850.80" fill="none" stroke="#fffee0" stroke-width="28.2" stroke-linecap="round"/><line x1="522.0" y1="118.4" x2="566.9" y2="522.2" stroke="#e01010" stroke-width="1"/><circle cx="522.0" cy="118.4" r="1.8" fill="#ff3030" stroke="#dd0000" stroke-width="1"/><circle cx="566.9" cy="522.2" r="1.8" fill="#ff3030" stroke="#dd0000" stroke-width="1"/><line x1="555.72" y1="118.4" x2="600.62" y2="522.2" stroke="#e01010" stroke-width="1"/><line x1="537.5" y1="108" x2="600.62" y2="522.2" stroke="#e01818" stroke-width="1"/><line x1="519.7" y1="92.6" x2="555.72" y2="118.4" stroke="#e01818" stroke-width="1"/><circle cx="555.72" cy="118.4" r="1.8" fill="#ff3030" stroke="#dd0000" stroke-width="1"/><circle cx="600.62" cy="522.2" r="1.8" fill="#ff3030" stroke="#dd0000" stroke-width="1"/><line x1="589.44" y1="118.4" x2="634.3399999999999" y2="522.2" stroke="#e01010" stroke-width="1"/><line x1="571.22" y1="108" x2="634.3399999999999" y2="522.2" stroke="#e01818" stroke-width="1"/><line x1="540.5" y1="108.8" x2="589.44" y2="118.4" stroke="#e01818" stroke-width="1"/><circle cx="589.44" cy="118.4" r="1.8" fill="#ff3030" stroke="#dd0000" stroke-width="1"/><circle cx="634.3399999999999" cy="522.2" r="1.8" fill="#ff3030" stroke="#dd0000" stroke-width="1"/><line x1="623.16" y1="118.4" x2="668.06" y2="522.2" stroke="#e01010" stroke-width="1"/><line x1="604.94" y1="108" x2="668.06" y2="522.2" stroke="#e01818" stroke-width="1"/><line x1="574.22" y1="108.8" x2="623.16" y2="118.4" stroke="#e01818" stroke-width="1"/><circle cx="623.16" cy="118.4" r="1.8" fill="#ff3030" stroke="#dd0000" stroke-width="1"/><circle cx="668.06" cy="522.2" r="1.8" fill="#ff3030" stroke="#dd0000" stroke-width="1"/><line x1="656.88" y1="118.4" x2="701.78" y2="522.2" stroke="#e01010" stroke-width="1"/><line x1="638.66" y1="108" x2="701.78" y2="522.2" stroke="#e01818" stroke-width="1"/><line x1="607.94" y1="108.8" x2="656.88" y2="118.4" stroke="#e01818" stroke-width="1"/><circle cx="656.88" cy="118.4" r="1.8" fill="#ff3030" stroke="#dd0000" stroke-width="1"/><circle cx="701.78" cy="522.2" r="1.8" fill="#ff3030" stroke="#dd0000" stroke-width="1"/><line x1="690.6" y1="118.4" x2="735.5" y2="522.2" stroke="#e01010" stroke-width="1"/><line x1="672.38" y1="108" x2="735.5" y2="522.2" stroke="#e01818" stroke-width="1"/><line x1="641.66" y1="108.8" x2="690.6" y2="118.4" stroke="#e01818" stroke-width="1"/><circle cx="690.6" cy="118.4" r="1.8" fill="#ff3030" stroke="#dd0000" stroke-width="1"/><circle cx="735.5" cy="522.2" r="1.8" fill="#ff3030" stroke="#dd0000" stroke-width="1"/><line x1="724.3199999999999" y1="118.4" x2="769.22" y2="522.2" stroke="#e01010" stroke-width="1"/><line x1="706.1" y1="108" x2="769.22" y2="522.2" stroke="#e01818" stroke-width="1"/><line x1="675.38" y1="108.8" x2="724.3199999999999" y2="118.4" stroke="#e01818" stroke-width="1"/><circle cx="724.3199999999999" cy="118.4" r="1.8" fill="#ff3030" stroke="#dd0000" stroke-width="1"/><circle cx="769.22" cy="522.2" r="1.8" fill="#ff3030" stroke="#dd0000" stroke-width="1"/><line x1="758.04" y1="118.4" x2="802.9399999999999" y2="522.2" stroke="#e01010" stroke-width="1"/><line x1="739.8199999999999" y1="108" x2="802.9399999999999" y2="522.2" stroke="#e01818" stroke-width="1"/><line x1="709.1" y1="108.8" x2="758.04" y2="118.4" stroke="#e01818" stroke-width="1"/><circle cx="758.04" cy="118.4" r="1.8" fill="#ff3030" stroke="#dd0000" stroke-width="1"/><circle cx="802.9399999999999" cy="522.2" r="1.8" fill="#ff3030" stroke="#dd0000" stroke-width="1"/><line x1="519.7" y1="92.6" x2="522" y2="118.4" stroke="#e01818" stroke-width="1"/><line x1="492" y1="79" x2="741.5" y2="108.3" stroke="#e02020" stroke-width="1"/><line x1="492" y1="79" x2="522" y2="118.4" stroke="#3030c0" stroke-width="1.1"/><ellipse cx="491.5" cy="86.5" rx="1.8" ry="2.5" fill="#9a9a8a"/><path d="M492 72 L493.5 77.5 L499 79 L493.5 80.5 L492 86 L490.5 80.5 L485 79 L490.5 77.5 Z" fill="#0000e0"/></g></svg>
<div class="t" style="right:29px;top:865px;font-size:11px;text-align:right;line-height:12.3px;color:#101010">X: 0,000 Y: 0,000 Z: 0,000<br>F: 00000 S: 000</div>
<div class="a" style="left:482px;top:903px;width:49px;height:49px;border:1px solid #6b6b6b;background:#f0f0f0"></div>
<div class="a" style="left:535px;top:903px;width:49px;height:49px;border:1px solid #6b6b6b;background:#f0f0f0"></div>
<div class="a" style="left:593px;top:903px;width:49px;height:49px;border:1px solid #6b6b6b;background:#f0f0f0"></div>
<div class="a" style="left:646px;top:903px;width:49px;height:49px;border:1px solid #6b6b6b;background:#f0f0f0"></div>
<div class="t" style="left:657px;top:941px;font-size:10px;color:#000;font-family:'Liberation Sans';">Center</div>
<div class="a" style="left:699px;top:903px;width:49px;height:49px;border:1px solid #6b6b6b;background:#f0f0f0"></div>
<div class="t" style="left:709px;top:941px;font-size:10px;color:#000;font-family:'Liberation Sans';">Corner</div>
<div class="a" style="left:752px;top:903px;width:49px;height:49px;border:1px solid #6b6b6b;background:#f0f0f0"></div>
<div class="t" style="left:765px;top:941px;font-size:10px;color:#000;font-family:'Liberation Sans';">Frame</div>
<div class="a" style="left:805px;top:903px;width:49px;height:49px;border:1px solid #6b6b6b;background:#f0f0f0"></div>
<div class="t" style="left:817px;top:941px;font-size:10px;color:#000;font-family:'Liberation Sans';">Focus</div>
<div class="a" style="left:858px;top:903px;width:49px;height:49px;border:1px solid #6b6b6b;background:#f0f0f0"></div>
<div class="t" style="left:873px;top:941px;font-size:10px;color:#000;font-family:'Liberation Sans';">Blink</div>
<div class="a" style="left:911px;top:903px;width:49px;height:49px;border:1px solid #6b6b6b;background:#f0f0f0"></div>
<div class="t" style="left:916px;top:941px;font-size:10px;color:#000;font-family:'Liberation Sans';">Лазер на</div>
<div class="a" style="left:964px;top:903px;width:49px;height:49px;border:1px solid #6b6b6b;background:#f0f0f0"></div>
<div class="t" style="left:981px;top:941px;font-size:10px;color:#000;font-family:'Liberation Sans';">Z-0</div>
<div class="a" style="left:1017px;top:903px;width:49px;height:49px;border:1px solid #6b6b6b;background:#f0f0f0"></div>
<div class="t" style="left:1028px;top:941px;font-size:10px;color:#000;font-family:'Liberation Sans';">X, Y, 0</div>
<div class="a" style="left:1155px;top:903px;width:49px;height:49px;border:1px solid #6b6b6b;background:#f0f0f0"></div>
<div class="a" style="left:1208px;top:903px;width:49px;height:49px;border:1px solid #6b6b6b;background:#f0f0f0"></div>
<svg style="left:0;top:0" width="1280" height="1024" viewBox="0 0 1280 1024"><defs><linearGradient id="bolt" x1="0" y1="0" x2="0.3" y2="1"><stop offset="0" stop-color="#ffa020"/><stop offset="0.6" stop-color="#ffc020"/><stop offset="1" stop-color="#ffe040"/></linearGradient><linearGradient id="lockb" x1="0" y1="0" x2="1" y2="1"><stop offset="0" stop-color="#fff0a0"/><stop offset="1" stop-color="#e0a020"/></linearGradient><linearGradient id="shk" x1="0" y1="0" x2="1" y2="0"><stop offset="0" stop-color="#909090"/><stop offset="0.5" stop-color="#e8e8e8"/><stop offset="1" stop-color="#808080"/></linearGradient><radialGradient id="walk" cx="0.4" cy="0.3" r="0.8"><stop offset="0" stop-color="#b8b8b8"/><stop offset="1" stop-color="#707070"/></radialGradient><radialGradient id="bulb" cx="0.4" cy="0.35" r="0.7"><stop offset="0" stop-color="#ffd080"/><stop offset="1" stop-color="#f0a030"/></radialGradient><pattern id="hatch" width="3" height="3" patternUnits="userSpaceOnUse" patternTransform="rotate(45)"><rect width="3" height="3" fill="#ffc8c8"/><rect width="1.2" height="3" fill="#ff9090"/></pattern></defs><path d="M504 906 L520 906 L512 921 L518 921 L508 933 L514 933 L497 951 L503 935 L498 935 L503 922 L497 922 Z" fill="url(#bolt)" stroke="#e08010" stroke-width="0.6"/><path d="M551 931 L551 918 Q551 909 559 909 Q567 909 567 918 L567 931" fill="none" stroke="url(#shk)" stroke-width="4.5"/><path d="M547 929 L568 926 L572 931 L571 946 L551 949 L547 945 Z" fill="url(#lockb)" stroke="#c08a20" stroke-width="0.7"/><rect x="553" y="930" width="4" height="2" fill="#222"/><circle cx="562" cy="937" r="2.2" fill="#222"/><rect x="561" y="937" width="2" height="6" fill="#222"/><g fill="none" stroke="#8a8a8a" stroke-width="1.3"><circle cx="617.5" cy="925" r="14.5"/><path d="M626.5 909.5 A17.5 17.5 0 0 1 609.5 941.5"/><path d="M617.5 940 L617.5 946.5"/><ellipse cx="617.5" cy="948" rx="9.5" ry="1.6"/><path d="M602 911.5 a6.5 6.5 0 0 1 13 0 q0 5 -6.5 11 q-6.5 -6 -6.5 -11z" fill="#f0f0f0"/><circle cx="608.5" cy="911" r="2.2"/></g><path d="M612 921 q5 -3 10 -2 q5 1 7 -1 l1 4 q-4 3 -8 2 q-5 1 -7 4 z M608 928 q3 -1 4 2 l-2 4 q-2 -2 -2 -6z" fill="#c8c8c8"/><path d="M666.9,910.3 C667.4,908.9 669.4,908.5 670.4,909.5 C671.4,910.5 671.4,915.7 673.0,916.4 C674.6,917.1 678.5,913.7 679.9,913.8 C681.4,913.8 682.4,915.6 681.7,916.9 C681.1,918.2 676.2,919.8 676.0,921.5 C675.8,923.3 680.3,925.9 680.6,927.3 C681.0,928.7 679.7,930.2 678.2,929.9 C676.8,929.7 673.7,925.5 672.0,925.9 C670.3,926.3 669.2,931.3 668.0,932.1 C666.8,932.9 665.0,932.1 664.7,930.6 C664.5,929.2 667.5,925.0 666.7,923.5 C665.8,922.0 660.6,922.5 659.5,921.6 C658.4,920.7 658.6,918.7 659.9,918.0 C661.2,917.4 666.1,918.9 667.3,917.7 C668.4,916.4 666.4,911.6 666.9,910.3Z" fill="url(#hatch)" stroke="#f08080" stroke-width="0.8"/><g><circle cx="671" cy="921" r="12" fill="none" stroke="#7a7a20" stroke-width="2.2"/><circle cx="671" cy="921" r="6" fill="none" stroke="#8a8a20" stroke-width="1.5"/><path d="M653 921 L689 921 M671 903.5 L671 939" stroke="#8a8a20" stroke-width="1.8"/><path d="M656 939 L669 925" stroke="#e01010" stroke-width="2.2"/><path d="M671.5 922.5 L669.5 930 L664 926 Z" fill="#e01010"/></g><rect x="706" y="906" width="34" height="34" fill="none" stroke="#c8c8c8" stroke-width="0.8"/><path d="M718.2,909.4 C718.7,907.8 721.1,907.3 722.3,908.5 C723.5,909.8 723.4,916.1 725.2,917.0 C727.1,917.8 731.8,913.5 733.5,913.5 C735.2,913.5 736.4,915.7 735.6,917.2 C734.8,918.7 728.7,920.5 728.5,922.6 C728.3,924.6 733.8,927.7 734.3,929.4 C734.8,931.0 733.2,932.8 731.5,932.5 C729.8,932.2 726.1,927.0 724.1,927.4 C722.1,927.8 720.9,934.0 719.5,935.0 C718.1,936.0 715.9,935.0 715.6,933.3 C715.4,931.6 719.3,926.5 718.2,924.8 C717.2,923.0 710.9,923.7 709.5,922.7 C708.1,921.7 708.4,919.2 710.0,918.5 C711.5,917.8 717.5,919.8 718.9,918.3 C720.3,916.8 717.6,911.0 718.2,909.4Z" fill="url(#hatch)" stroke="#f07070" stroke-width="0.8"/><path d="M708 939 L726 922" stroke="#d01010" stroke-width="2"/><path d="M706 941 L708 934.5 L712.5 939 Z" fill="#d01010"/><path d="M771.2,910.4 C771.7,908.8 774.1,908.3 775.3,909.5 C776.5,910.8 776.4,917.1 778.2,918.0 C780.1,918.8 784.8,914.5 786.5,914.5 C788.2,914.5 789.4,916.7 788.6,918.2 C787.8,919.7 781.7,921.5 781.5,923.6 C781.3,925.6 786.8,928.7 787.3,930.4 C787.8,932.0 786.2,933.8 784.5,933.5 C782.8,933.2 779.1,928.0 777.1,928.4 C775.1,928.8 773.9,935.0 772.5,936.0 C771.1,937.0 768.9,936.0 768.6,934.3 C768.4,932.6 772.3,927.5 771.2,925.8 C770.2,924.0 763.9,924.7 762.5,923.7 C761.1,922.7 761.4,920.2 763.0,919.5 C764.5,918.8 770.5,920.8 771.9,919.3 C773.3,917.8 770.6,912.0 771.2,910.4Z" fill="url(#hatch)" stroke="#f07070" stroke-width="0.8"/><path d="M758 939 L758 907 L794 907 L794 939 Z" fill="none" stroke="#c01010" stroke-width="2"/><path d="M755 913 L758 905 L761 913 Z M790 904 L797 907 L790 910 Z M791 934 L794 942 L797 934 Z M763 936 L756 939 L763 942 Z" fill="#c01010"/><rect x="820" y="904" width="18" height="6" fill="#111"/><ellipse cx="829" cy="912" rx="14" ry="5" fill="none" stroke="#e8e020" stroke-width="2"/><rect x="821" y="909" width="16" height="5" fill="#222"/><ellipse cx="829" cy="912" rx="5" ry="1.5" fill="#60b0ff"/><path d="M829 914 L829 938 M825 936 L829 939 L833 936" stroke="#d01010" stroke-width="1.6" fill="none"/><g fill="#f4e48a" stroke="#e0cc60" stroke-width="0.5"><circle cx="869.9" cy="927.0" r="1.7"/><circle cx="868.1" cy="921.5" r="1.7"/><circle cx="868.7" cy="915.7" r="1.7"/><circle cx="871.6" cy="910.6" r="1.7"/><circle cx="876.3" cy="907.2" r="1.7"/><circle cx="882.0" cy="906.0" r="1.7"/><circle cx="887.7" cy="907.2" r="1.7"/><circle cx="892.4" cy="910.6" r="1.7"/><circle cx="895.3" cy="915.7" r="1.7"/><circle cx="895.9" cy="921.5" r="1.7"/><circle cx="894.1" cy="927.0" r="1.7"/></g><circle cx="882" cy="920" r="9.2" fill="url(#bulb)"/><path d="M878 919 q2 -3 4 0 q2 -3 4 0 M880 920 L880 928 M884 920 L884 928" stroke="#fff0c0" stroke-width="0.9" fill="none"/><rect x="877" y="928" width="10" height="9" rx="2" fill="#d8d8d8" stroke="#a8a8a8" stroke-width="0.6"/><path d="M877 931 H887 M877 934 H887" stroke="#b0b0b0" stroke-width="0.6"/><rect x="917" y="905" width="37" height="34" fill="#ffffff"/><g fill="none" stroke="#e02020" stroke-width="1.3" stroke-linecap="round"><path d="M942 907.5 L927 914 L944.5 917 L928.5 924.5 M928.5 924.5 L930 919.5 M928.5 924.5 L934 923.5"/><path d="M921 929 L925 928 M923.5 928 L922 935.5"/><ellipse cx="931" cy="931" rx="3" ry="3.6"/><ellipse cx="939.5" cy="931" rx="3" ry="3.6"/><path d="M951 926 L945 936"/><circle cx="946" cy="927" r="1.4"/><circle cx="950" cy="935" r="1.4"/></g><rect x="971" y="905" width="36" height="35" fill="#fff"/><path d="M979 908.5 L998.5 908.5 L979 922.5 L998.5 922.5" fill="none" stroke="#e02020" stroke-width="1.3"/><circle cx="987.5" cy="932" r="7" fill="none" stroke="#e02020" stroke-width="1.3"/><path d="M983 927.5 L992 936.5 M992 927.5 L983 936.5" stroke="#e02020" stroke-width="1.2"/><rect x="1024" y="905" width="36" height="35" fill="#fff"/><path d="M1028 906.5 L1039.5 918 M1039.5 906.5 L1028 918 M1044.5 906.5 L1050 912 M1055.5 906.5 L1044.5 918" fill="none" stroke="#e02020" stroke-width="1.3"/><ellipse cx="1041.5" cy="929.8" rx="8" ry="6.5" fill="none" stroke="#e02020" stroke-width="1.3"/><path d="M1036.5 925 L1046.5 934.5 M1046.5 925 L1036.5 934.5" stroke="#e02020" stroke-width="1.2"/><circle cx="1179.5" cy="927.5" r="22.5" fill="url(#walk)"/><circle cx="1181.5" cy="914" r="2.8" fill="#fff"/><path d="M1180 918 L1177 929 L1172 941 M1177 929 L1183 934 L1186 941 M1179 920 L1173 925 L1172 930 M1180 921 L1184 927 L1188 929" stroke="#fff" stroke-width="2.6" fill="none" stroke-linecap="round" stroke-linejoin="round"/><defs><linearGradient id="stopg" x1="0" y1="0" x2="0" y2="1"><stop offset="0" stop-color="#a8a8a8"/><stop offset="1" stop-color="#5c5c5c"/></linearGradient></defs><path d="M1222 906 L1242 906 L1254 918 L1254 937 L1242 949 L1222 949 L1210 937 L1210 918 Z" fill="url(#stopg)" stroke="#505050" stroke-width="1"/><path d="M1223 944 L1220 930 L1221 920 Q1221 917 1223.5 918 L1225 928 L1225 914 Q1226 911 1228 913 L1229 927 L1230 911 Q1231 908 1233 910 L1233 927 L1235 913 Q1236 910 1238 912 L1237 932 L1242 925 Q1246 923 1244 928 L1237 942 Z" fill="#ffffff"/></svg>
<div class="t" style="left:62px;top:966px;font-size:11px;color:#000;font-family:'Liberation Sans';letter-spacing:0.7px">Линий:</div>
<div class="t" style="left:108px;top:966px;font-size:11px;color:#000;font-family:'Liberation Sans';">73711</div>
<div class="a" style="left:142px;top:960px;width:1px;height:21px;background:#a0a0a0"></div>
<div class="t" style="left:147px;top:966px;font-size:11px;color:#000;font-family:'Liberation Sans';">Буфер</div>
<div class="a" style="left:188px;top:959px;width:70px;height:21px;border:1px solid #c8c8c8;background:#e6e6e6"></div>
<svg style="left:261px;top:961px" width="16" height="16" viewBox="0 0 16 16"><path d="M14 2 L6 10 L9 13 L2 14 L3 7 L6 10" fill="#c8c8c8" stroke="#b8b8b8" stroke-width="1.2" stroke-linejoin="round"/></svg>
<div class="a" style="left:283px;top:960px;width:1px;height:21px;background:#a0a0a0"></div>
<div class="t" style="left:288px;top:966px;font-size:11px;color:#000;font-family:'Liberation Sans';letter-spacing:0.45px">Расчетное Время:</div>
<div class="t" style="left:394px;top:966px;font-size:11px;color:#000;font-family:'Liberation Sans';letter-spacing:0.3px">3 hours ,25 min ,8 sec</div>
<div class="t" style="left:590px;top:966px;font-size:11px;color:#3a8fd6;font-family:'Liberation Sans';letter-spacing:0.45px">From beginner to expert - Live!</div>
<div class="a" style="left:835px;top:959px;width:1px;height:22px;background:#a8a8a8"></div>
<div class="a" style="left:874px;top:959px;width:1px;height:22px;background:#a8a8a8"></div>
<div class="a" style="left:880px;top:959px;width:1px;height:22px;background:#a8a8a8"></div>
<div class="a" style="left:937px;top:959px;width:1px;height:22px;background:#a8a8a8"></div>
<div class="a" style="left:1002px;top:959px;width:1px;height:22px;background:#a8a8a8"></div>
<div class="a" style="left:1066px;top:959px;width:1px;height:22px;background:#a8a8a8"></div>
<div class="t" style="left:839px;top:966px;font-size:11px;color:#000;font-family:'Liberation Sans';letter-spacing:0.4px">29.3h</div>
<div class="t" style="left:884px;top:966px;font-size:11px;color:#000;font-family:'Liberation Sans';letter-spacing:0.35px">S [1,00x]</div>
<div class="t" style="left:942px;top:966px;font-size:11px;color:#000;font-family:'Liberation Sans';letter-spacing:0.35px">G1 [1,00x]</div>
<div class="t" style="left:1007px;top:966px;font-size:11px;color:#000;font-family:'Liberation Sans';letter-spacing:0.3px">G0 [1,00x]</div>
<div class="t" style="left:1079px;top:966px;font-size:11px;color:#000;font-family:'Liberation Sans';letter-spacing:0.45px">Состояние:</div>
<div class="t" style="left:1148px;top:966px;font-size:11px;color:#000;font-family:'Liberation Sans';letter-spacing:0.55px">ожидает команд</div>
<svg style="left:1248px;top:970px" width="11" height="11" viewBox="0 0 11 11" fill="#b8b8b8"><rect x="8" y="0" width="2" height="2"/><rect x="5" y="4" width="2" height="2"/><rect x="8" y="4" width="2" height="2"/><rect x="2" y="8" width="2" height="2"/><rect x="5" y="8" width="2" height="2"/><rect x="8" y="8" width="2" height="2"/></svg>
<div class="a" style="left:0px;top:984px;width:1280px;height:40px;background:linear-gradient(90deg,#1e2d38 0%,#1d2b3a 50%,#18243a 100%)"></div>
<svg style="left:15px;top:995px" width="18" height="17" viewBox="0 0 18 17" fill="#fff"><path d="M0 2.5 L7.3 1.5 L7.3 8 L0 8 Z M8.3 1.3 L17.5 0 L17.5 8 L8.3 8 Z M0 9 L7.3 9 L7.3 15.5 L0 14.5 Z M8.3 9 L17.5 9 L17.5 17 L8.3 15.7 Z"/></svg>
<div class="a" style="left:48px;top:984px;width:288px;height:40px;background:#f0f0f0"></div>
<svg style="left:59px;top:996px" width="18" height="17" viewBox="0 0 18 17"><circle cx="11" cy="6.2" r="5.3" fill="none" stroke="#222" stroke-width="1.3"/><path d="M7.2 10 L1 16" stroke="#222" stroke-width="1.5"/></svg>
<div class="t" style="left:88px;top:996px;font-size:15px;color:#333;font-family:'Liberation Sans';letter-spacing:0.8px">Поиск</div>
<svg style="left:258px;top:988px" width="72" height="36" viewBox="0 0 72 36"><defs><linearGradient id="cst" x1="0" y1="0" x2="0" y2="1"><stop offset="0" stop-color="#e89a6a"/><stop offset="1" stop-color="#c86a40"/></linearGradient></defs><path d="M8 34 L8 4 L11 1 L14 4 L17 1 L20 4 L20 34 Z M50 34 L50 4 L53 1 L56 4 L59 1 L62 4 L62 34 Z M20 34 L20 16 L30 16 L35 11 L40 16 L50 16 L50 34 Z" fill="url(#cst)"/><path d="M31 34 L31 26 Q35 20 39 26 L39 34 Z" fill="#f8f8f8"/><path d="M0 36 L4 33 L68 33 L72 36 Z" fill="#e8c070"/><g fill="#9a4a2a"><rect x="11" y="10" width="2" height="3"/><rect x="15" y="10" width="2" height="3"/><rect x="11" y="18" width="2" height="3"/><rect x="15" y="18" width="2" height="3"/><rect x="53" y="10" width="2" height="3"/><rect x="57" y="10" width="2" height="3"/><rect x="53" y="18" width="2" height="3"/><rect x="57" y="18" width="2" height="3"/></g></svg>
<svg style="left:351px;top:995px" width="18" height="17" viewBox="0 0 18 17" fill="none" stroke="#fff" stroke-width="1.3"><rect x="2" y="4" width="11" height="9"/><path d="M0 1.5 H13 M0 15.5 H13 M16 1 V4 M16 6 V11 M16 13 V16"/></svg>
<svg style="left:399px;top:994px" width="24" height="19" viewBox="0 0 24 19"><path d="M0 2 L0 18 L23 18 L23 4 L10 4 L8 1 L1 1 Z" fill="#f4c24a"/><path d="M0 6 L23 6 L23 18 L0 18 Z" fill="#ffd86a"/><rect x="7" y="10" width="9" height="8" fill="#3a8fd8"/><rect x="9" y="13" width="5" height="5" fill="#ffd86a"/></svg>
<div class="a" style="left:391px;top:1022px;width:40px;height:2px;background:#76b9ed"></div>
<svg style="left:447px;top:991px" width="26" height="26" viewBox="0 0 26 26"><circle cx="13" cy="13" r="12" fill="#fff"/><path d="M8 6 L13 13 L18 6 M13 13 L13 21" stroke="#f33" stroke-width="2.8" fill="none" stroke-linecap="round"/></svg>
<div class="a" style="left:440px;top:1022px;width:40px;height:2px;background:#76b9ed"></div>
<svg style="left:499px;top:993px" width="20" height="23" viewBox="0 0 20 23"><rect x="0.5" y="0.5" width="19" height="22" rx="1.5" fill="#5a6a7a"/><rect x="2.5" y="2.5" width="15" height="4" fill="#4fb3ef"/><rect x="2.5" y="8.5" width="2.8" height="2.6" fill="#e8eef4"/><rect x="6.3" y="8.5" width="2.8" height="2.6" fill="#e8eef4"/><rect x="10.1" y="8.5" width="2.8" height="2.6" fill="#e8eef4"/><rect x="13.899999999999999" y="8.5" width="2.8" height="2.6" fill="#e8eef4"/><rect x="2.5" y="12.0" width="2.8" height="2.6" fill="#e8eef4"/><rect x="6.3" y="12.0" width="2.8" height="2.6" fill="#e8eef4"/><rect x="10.1" y="12.0" width="2.8" height="2.6" fill="#e8eef4"/><rect x="13.899999999999999" y="12.0" width="2.8" height="2.6" fill="#e8eef4"/><rect x="2.5" y="15.5" width="2.8" height="2.6" fill="#e8eef4"/><rect x="6.3" y="15.5" width="2.8" height="2.6" fill="#e8eef4"/><rect x="10.1" y="15.5" width="2.8" height="2.6" fill="#e8eef4"/><rect x="13.899999999999999" y="15.5" width="2.8" height="2.6" fill="#e8eef4"/><rect x="13.9" y="15.5" width="3" height="6" fill="#1a5a9a"/></svg>
<svg style="left:545px;top:991px" width="26" height="23" viewBox="0 0 26 23"><path d="M2 14 Q0 5 10 4 Q20 3 21 10 Q22 15 16 15 Q13 15 14 18 Q14 22 8 21 Q3 20 2 14 Z" fill="#d8dfe8"/><circle cx="7" cy="10" r="1.8" fill="#e33"/><circle cx="11" cy="7.5" r="1.8" fill="#3a3"/><circle cx="15.5" cy="8" r="1.8" fill="#36e"/><circle cx="6.5" cy="15" r="1.8" fill="#fc3"/><path d="M24 1 L12 18" stroke="#d8a060" stroke-width="2.5"/></svg>
<svg style="left:594px;top:992px" width="24" height="22" viewBox="0 0 24 22"><path d="M4 3 L20 1 L23 19 L7 21 Z" fill="#cfe8f0"/><path d="M1 5 L17 3 L20 19 L4 21 Z" fill="#7fc4d8"/><path d="M3 7 L16 5.5" stroke="#e8f8ff" stroke-width="1.5"/></svg>
<div class="a" style="left:587px;top:1022px;width:40px;height:2px;background:#76b9ed"></div>
<div class="a" style="left:632px;top:984px;width:48px;height:40px;background:#3a4856"></div>
<svg style="left:644px;top:992px" width="24" height="24" viewBox="0 0 24 24"><circle cx="12" cy="12" r="11.9" fill="#000"/><path d="M5.3 5.3 V17.7 H11.2" stroke="#fff" stroke-width="2" fill="none" stroke-linejoin="round"/><path d="M9.2 10 L11 6.6 H16 L20 14.6 M9.2 10 L11 13.4 H15.2 L15.9 10.4" stroke="#fff" stroke-width="1.3" fill="none" stroke-linejoin="round"/></svg>
<div class="a" style="left:632px;top:1022px;width:48px;height:2px;background:#76b9ed"></div>
<svg style="left:696px;top:993px" width="16" height="22" viewBox="0 0 16 22"><path d="M14 1 Q4 6 3 20 Q8 14 14 1 Z" fill="#b01a28"/></svg>
<div class="a" style="left:685px;top:1022px;width:40px;height:2px;background:#76b9ed"></div>
<svg style="left:1058px;top:1000px" width="14" height="8" viewBox="0 0 14 8"><path d="M1 7 L7 1 L13 7" stroke="#fff" stroke-width="1.3" fill="none"/></svg>
<svg style="left:1080px;top:997px" width="18" height="15" viewBox="0 0 18 15" fill="none" stroke="#fff" stroke-width="1.1"><rect x="4" y="1" width="13" height="9"/><path d="M10.5 10 V13 M6 14 H15 M0.5 4 V14.5 M0.5 4 H3 V7 H0.5"/></svg>
<svg style="left:1104px;top:997px" width="18" height="16" viewBox="0 0 18 16" fill="none" stroke="#fff" stroke-width="1.1"><path d="M1 5 H4 L8 1.5 V14.5 L4 11 H1 Z M10.5 5 Q12 8 10.5 11 M13 3 Q15.5 8 13 13 M15.5 1 Q19 8 15.5 15"/></svg>
<div class="t" style="left:1131px;top:998px;font-size:12px;color:#fff;font-family:'Liberation Sans';letter-spacing:0.2px">РУС</div>
<div class="t" style="left:1179.5px;top:989px;font-size:12px;color:#fff;font-family:'Liberation Sans';letter-spacing:-0.2px">10:48</div>
<div class="t" style="left:1166px;top:1007px;font-size:12px;color:#fff;font-family:'Liberation Sans';letter-spacing:-0.4px">25.05.2024</div>
<svg style="left:1238px;top:996px" width="26" height="26" viewBox="0 0 26 26"><path d="M1 1 H18 V12 H9 L5 16 V12 H1 Z" fill="#fff"/><path d="M4 4 H15 M4 7 H15 M4 10 H12" stroke="#333" stroke-width="1"/><circle cx="17" cy="15.5" r="7.5" fill="#2a2a2a" stroke="#777" stroke-width="1"/><text x="14" y="19.5" font-family="Liberation Sans" font-size="11" fill="#fff">3</text></svg>
<div class="a" style="left:1275px;top:984px;width:1px;height:40px;background:#5a6270"></div>
<div class="a" style="left:0;top:0;width:58px;height:984px;overflow:hidden"><svg style="left:0;top:0" width="58" height="700" viewBox="0 0 58 700"><defs><linearGradient id="scr" x1="0" y1="0" x2="1" y2="1"><stop offset="0" stop-color="#d8f0fc"/><stop offset="1" stop-color="#4aa8ec"/></linearGradient></defs><path d="M27 11 L58 17 L58 40 L27 33 Z" fill="url(#scr)" stroke="#2d6fb0" stroke-width="1.2"/><path d="M36 38 L50 41 L47 44 L34 42 Z" fill="#d8dde2"/><path d="M25 44 L49 47.5 L45 52.5 L21 49 Z" fill="#eef2f6" stroke="#a0b0c0" stroke-width="0.6"/><path d="M25 46.5 L47 49.5 M23.5 48 L46 51" stroke="#b8c4d0" stroke-width="0.6"/><rect x="13" y="42" width="12" height="12" fill="#fff" stroke="#c8c8c8" stroke-width="0.5"/><path d="M16 51 Q16 45 22 45 L20 43.5 M22 45 L20 47" stroke="#1a6fd0" stroke-width="1.5" fill="none"/><defs><radialGradient id="otb" cx="0.5" cy="0.85" r="0.9"><stop offset="0" stop-color="#c8eee0"/><stop offset="0.6" stop-color="#78b878"/><stop offset="1" stop-color="#2e7a30"/></radialGradient></defs><circle cx="37" cy="423" r="21.5" fill="url(#otb)"/><rect x="34" y="405" width="15" height="13" fill="#d8f0d0" stroke="#90c890" stroke-width="0.6" transform="rotate(12 41 411)"/><path d="M38 408 L42 413 L46 407" stroke="#2a8a3a" stroke-width="1.6" fill="none"/><rect x="20" y="411" width="15" height="15" fill="#e8eef8" stroke="#8aa8d8" stroke-width="0.6" transform="rotate(15 27 418)"/><text x="20.5" y="423" font-family="Liberation Sans" font-weight="bold" font-size="11" fill="#2a5ab8">W</text><rect x="38" y="417" width="15" height="17" fill="#f8e0d8" stroke="#e09080" stroke-width="0.6" transform="rotate(15 45 425)"/><text x="40" y="429" font-family="Liberation Sans" font-weight="bold" font-size="10" fill="#d85030">P</text><rect x="26" y="420" width="18" height="18" fill="#fde89a" stroke="#e8c050" stroke-width="0.6" transform="rotate(12 35 429)"/><text x="27.5" y="434" font-family="Liberation Sans" font-weight="bold" font-size="12" fill="#e88a10">O</text><rect x="13" y="434" width="12" height="12" fill="#fff" stroke="#c8c8c8" stroke-width="0.5"/><path d="M16 443 Q16 437 22 437 L20 435.5 M22 437 L20 439" stroke="#1a5fb0" stroke-width="1.6" fill="none"/><path d="M36 498 L58 520 L36 542 L14 520 Z" fill="#e85a30"/><rect x="18" y="504" width="38" height="32" rx="4" fill="#f0a020"/><ellipse cx="37" cy="520" rx="16" ry="10" fill="#2a7a3a"/><ellipse cx="37" cy="520" rx="13" ry="8" fill="#fff"/><circle cx="37" cy="520" r="6" fill="#333"/><circle cx="35" cy="518" r="2" fill="#fff"/><rect x="13" y="532" width="12" height="12" fill="#fff"/><path d="M16 541 Q16 535 22 535 L20 533.5 M22 535 L20 537" stroke="#1a6fd0" stroke-width="1.5" fill="none"/><rect x="15" y="597" width="42" height="44" fill="#1a3ac8"/><rect x="22" y="597" width="20" height="12" fill="#e0e0e0"/><rect x="46" y="600" width="10" height="12" fill="#fff"/><text x="47" y="611" font-family="Liberation Sans" font-weight="bold" font-size="11" fill="#1a3ac8">E</text><rect x="20" y="615" width="35" height="24" fill="#fff"/><path d="M22 620 H53 M22 626 H53 M22 632 H53" stroke="#c03030" stroke-width="1.5"/><rect x="13" y="628" width="12" height="12" fill="#fff"/><path d="M16 637 Q16 631 22 631 L20 629.5 M22 631 L20 633" stroke="#1a6fd0" stroke-width="1.5" fill="none"/></svg>
<div class="t" style="left:25px;top:61px;font-size:12px;color:#fff;font-family:'Liberation Sans';text-shadow:0 0 2px #000,0 1px 1px #000">Этот</div>
<div class="t" style="left:5px;top:77px;font-size:12px;color:#fff;font-family:'Liberation Sans';text-shadow:0 0 2px #000,0 1px 1px #000">компьютер</div>
<div class="t" style="left:11px;top:452px;font-size:12px;color:#fff;font-family:'Liberation Sans';text-shadow:0 0 2px #000,0 1px 1px #000;letter-spacing:-0.3px">Office Tab</div>
<div class="t" style="left:11px;top:467px;font-size:12px;color:#fff;font-family:'Liberation Sans';text-shadow:0 0 2px #000,0 1px 1px #000;letter-spacing:-0.4px">Center 2.</div>
<div class="t" style="left:11px;top:550px;font-size:12px;color:#fff;font-family:'Liberation Sans';text-shadow:0 0 2px #000,0 1px 1px #000;letter-spacing:-0.2px">FastStone</div>
<div class="t" style="left:2px;top:565px;font-size:12px;color:#fff;font-family:'Liberation Sans';text-shadow:0 0 2px #000,0 1px 1px #000">Image Viewer</div>
<div class="t" style="left:22px;top:648px;font-size:12px;color:#fff;font-family:'Liberation Sans';text-shadow:0 0 2px #000,0 1px 1px #000;letter-spacing:-0.6px">TCE64</div>
</div><div class="a" style="left:1260px;top:136px;width:20px;height:48px;background:#3d1e1c"></div>
<svg style="left:1270px;top:148px" width="10" height="12" viewBox="0 0 10 12" fill="#fff"><rect x="0" y="1" width="9" height="1.3"/><rect x="0" y="5" width="9" height="1.3"/><rect x="0" y="9" width="9" height="1.3"/></svg>
<div class="a" style="left:1260px;top:184px;width:20px;height:35px;background:#f2f2f2"></div>
<svg style="left:1270px;top:198px" width="4" height="14" viewBox="0 0 4 14" fill="#222"><rect x="1" y="0" width="2" height="2"/><rect x="1" y="5" width="2" height="2"/><rect x="1" y="10" width="2" height="2"/></svg>
<div class="a" style="left:1260px;top:219px;width:20px;height:1px;background:#c8c8c8"></div>
<div class="a" style="left:1260px;top:220px;width:20px;height:378px;background:linear-gradient(90deg,#c8c8c8,#ececec 70%,#f0f0f0)"></div>
<div class="a" style="left:1260px;top:248px;width:20px;height:1px;background:#c0c0c0"></div>
<div class="a" style="left:1260px;top:598px;width:20px;height:114px;background:linear-gradient(90deg,#5a5a5a,#787878)"></div>
<div class="a" style="left:1260px;top:712px;width:20px;height:12px;background:#e8e8e8"></div>
<div class="a" style="left:1260px;top:724px;width:20px;height:50px;background:linear-gradient(90deg,#c8c8c8,#e0e0e0)"></div>
<div class="a" style="left:1260px;top:774px;width:20px;height:5px;background:#0b4a38"></div>
<div class="a" style="left:1260px;top:779px;width:20px;height:26px;background:#f4f4f4"></div>
<div class="t" style="left:1268px;top:781px;font-family:'Liberation Serif';font-size:20px;color:#e0205a">2</div>
<div class="a" style="left:1260px;top:805px;width:20px;height:28px;background:#0b4a38"></div>
<div class="a" style="left:1260px;top:833px;width:20px;height:63px;background:linear-gradient(90deg,#c8c8c8,#dcdcdc)"></div>
<div class="a" style="left:1260px;top:896px;width:20px;height:14px;background:#b8b8b8"></div>
<div class="a" style="left:1260px;top:910px;width:20px;height:1px;background:#e8e8e8"></div>
<div class="a" style="left:1259px;top:220px;width:3px;height:764px;background:linear-gradient(90deg,#6a6a6a,#8a8a8a)"></div>
</body></html>
